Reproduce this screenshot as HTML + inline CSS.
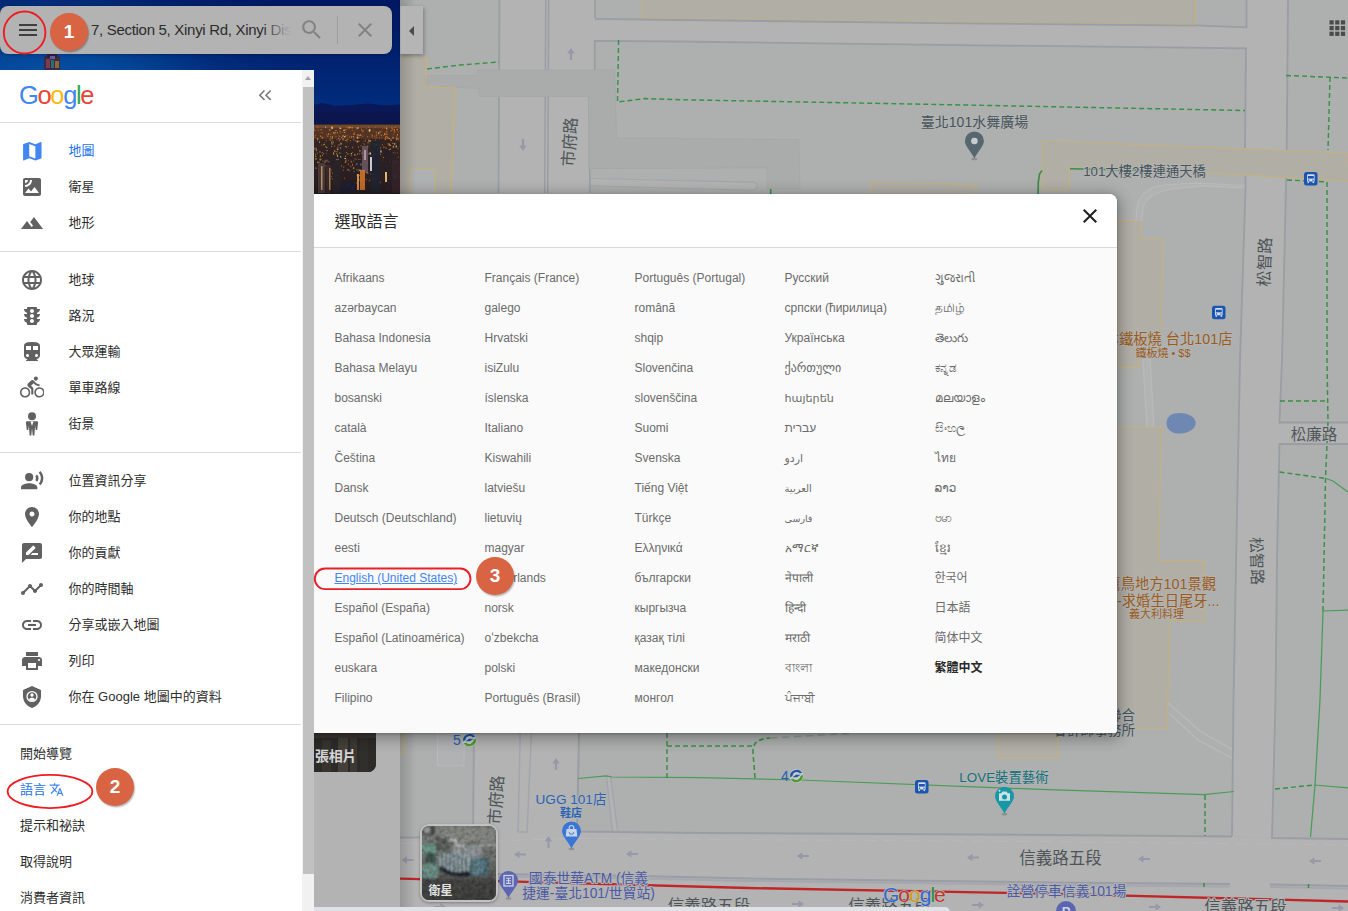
<!DOCTYPE html>
<html lang="zh-TW">
<head>
<meta charset="utf-8">
<title>Google 地圖 - 選取語言</title>
<style>
html,body{margin:0;padding:0;}
body{width:1348px;height:911px;overflow:hidden;background:#b3b3b3;font-family:"Liberation Sans","DejaVu Sans","Noto Sans CJK TC",sans-serif;}
#stage{position:relative;width:1348px;height:911px;overflow:hidden;background:#b3b3b3;}
.abs{position:absolute;}
svg{display:block;}
/* map */
#map{position:absolute;left:400px;top:0;width:948px;height:911px;}
/* place panel */
#panel{position:absolute;left:0;top:0;width:400px;height:911px;background:#b3b3b3;overflow:hidden;}
#photo{position:absolute;left:0;top:0;width:400px;height:240px;}
#photobtn{position:absolute;left:300px;top:700px;width:76px;height:72px;border-radius:8px;overflow:hidden;background:#2b2a28;}
#photobtn span{position:absolute;left:15px;top:45px;color:#d6d6d6;font-size:14px;font-weight:bold;white-space:nowrap;letter-spacing:-0.3px;}
/* search */
#search{position:absolute;left:0;top:6px;width:392px;height:48px;border-radius:8px;background:#b3b3b3;box-shadow:0 1px 3px rgba(0,0,0,.25);}
#search .q{position:absolute;left:91px;top:14px;width:205px;height:20px;line-height:20px;font-size:15px;color:#2c2c2c;white-space:nowrap;overflow:hidden;letter-spacing:-0.3px;}
#search .fade{position:absolute;left:262px;top:8px;width:34px;height:32px;background:linear-gradient(90deg,rgba(179,179,179,0),#b3b3b3 85%);}
#search .sep{position:absolute;left:337px;top:10px;width:1px;height:28px;background:#9d9d9d;}
#collapse{position:absolute;left:400px;top:6px;width:23px;height:48px;background:#b5b5b5;box-shadow:1px 2px 4px rgba(0,0,0,.3);border-left:1px solid #a9a9a9;box-sizing:border-box;}
#collapse i{position:absolute;left:8px;top:19.500px;width:0;height:0;border-top:5px solid transparent;border-bottom:5px solid transparent;border-right:5.500px solid #4a4a4a;}
/* menu */
#menu{position:absolute;left:0;top:70px;width:314px;height:841px;background:#fff;overflow:hidden;}
#menu .sb{position:absolute;left:302px;top:0;width:12px;height:841px;background:#f1f1f1;}
#menu .sb .up{position:absolute;left:3px;top:6px;width:0;height:0;border-left:3.5px solid transparent;border-right:3.5px solid transparent;border-bottom:4px solid #a3a3a3;}
#menu .sb .th{position:absolute;left:1px;top:17px;width:11px;height:787px;background:#c1c1c1;}
#menu .hr{position:absolute;left:0;width:301px;height:1px;background:#dcdcdc;}
#glogo{position:absolute;left:19px;top:7.500px;height:34px;line-height:34px;font-size:25.5px;letter-spacing:-1.35px;white-space:nowrap;font-family:"Liberation Sans",sans-serif;}
#glogo b{font-weight:normal;}
.row{position:absolute;left:0;width:301px;height:36px;}
.row svg{position:absolute;}
.row span{position:absolute;left:68.500px;top:9px;height:20px;line-height:20px;font-size:13px;color:#2e2e2e;white-space:nowrap;}
.row.sel span{color:#1a73e8;}
.row.t span{left:20px;}
/* dialog */
#dlg{position:absolute;left:231px;top:193.500px;width:886px;height:539.500px;border-radius:8px 8px 2px 2px;background:#fafafa;box-shadow:0 3px 14px 3px rgba(0,0,0,.3),0 1px 3px rgba(0,0,0,.22);overflow:hidden;}
#dlg .hd{position:absolute;left:0;top:0;width:886px;height:53.500px;background:#fff;border-bottom:1px solid #dadada;}
#dlg .hd h1{position:absolute;left:103.500px;top:16px;margin:0;font-size:16px;line-height:24px;font-weight:normal;color:#2e2e2e;white-space:nowrap;}
#dlg .hd svg{position:absolute;left:847px;top:10.500px;}
#dlg ul{position:absolute;top:69.800px;margin:0;padding:0;list-style:none;width:150px;}
#dlg li{height:30px;line-height:30px;font-size:12px;color:#6b6b6b;white-space:nowrap;}
#dlg li.cur{font-weight:bold;color:#2a2a2a;}
#dlg li a{color:#4285f4;text-decoration:underline;}
/* annotations */
.badge{position:absolute;width:38px;height:38px;border-radius:50%;background:#d86443;color:#fff;font-weight:bold;font-size:19px;line-height:38px;text-align:center;box-shadow:1px 1.500px 1.500px rgba(0,0,0,.28);font-family:"Liberation Sans",sans-serif;}
#satthumb{position:absolute;left:420px;top:824px;width:74px;height:74px;border:2px solid #c2c2c2;border-radius:9px;overflow:hidden;background:#555;box-shadow:0 1px 3px rgba(0,0,0,.3);}
#satthumb span{position:absolute;left:6.500px;top:57.500px;font-size:12px;line-height:14px;font-weight:bold;color:#e2e2e2;white-space:nowrap;}
#botstrip{position:absolute;left:314px;top:906.500px;width:636px;height:6px;background:#dfe2e7;border-top-right-radius:5px;}

</style>
</head>
<body>
<div id="stage">
<svg id="map" width="948" height="911" viewBox="400 0 948 911" font-family="Liberation Sans, Noto Sans CJK TC, sans-serif">
<defs><linearGradient id="lsh" x1="0" x2="1" y1="0" y2="0"><stop offset="0" stop-color="#000" stop-opacity=".16"/><stop offset="1" stop-color="#000" stop-opacity="0"/></linearGradient></defs>
<rect x="400" y="0" width="948" height="911" fill="#adb0af"/>
<g id="roads">
<polygon points="499.5,0 595,0 595,70 589,97 590,193 584,480 579,733 577,832 473,838 474,733 486,480 498.5,193" fill="#b3b3b3" />
<polygon points="594,18.8 680,19.7 980,23.3 1195.5,25.3 1247,27.3 1247,48.3 980,45.3 680,41.5 594,40.8" fill="#b3b3b3" />
<polygon points="1246.5,0 1288,0 1286.7,150 1286,186 1282,360 1279.5,422 1279.5,444 1277,560 1275.5,700 1272,838 1232,836 1233.5,700 1236.5,540 1240,360 1245.6,186 1245,150 1246.5,47.5" fill="#b3b3b3" />
<polygon points="1279,422.5 1348,422.5 1348,444 1279,444" fill="#b3b3b3" />
<polygon points="400,837.5 474,837.5 577,831.6 700,833 1048,835 1232,837 1272,838 1348,839 1348,911 400,911" fill="#b3b3b3" />
</g>
<g id="buildings">
<polygon points="399,58 427,58 425,86 455,88 451,193 449,260 399,260" fill="#b1aea6" stroke="#c3b182" stroke-width="1.2" />
<polygon points="410.5,169.5 435.5,169.5 435.5,215 410.5,215" fill="#aeb1b1" stroke="#c3b182" stroke-width="1.2" />
<polygon points="642,-2 1195.5,-2 1195.5,24.8 980,22.8 680,19.2 642,18.7" fill="#b1aea6" stroke="#c3b182" stroke-width="1.2" />
<polygon points="871,182 976,184.5 976,230 871,230" fill="#b1aea6" stroke="#c3b182" stroke-width="1.2" />
<polygon points="1090,220.6 1141.5,220.6 1141.5,239 1163,239 1160.7,352 1139.5,352 1139.5,367.7 1090,367.7" fill="#b1aea6" stroke="#c3b182" stroke-width="1.2" />
<polygon points="1090,427 1161.5,427 1158.5,560.6 1204.3,560.6 1204.3,621.5 1170,621.5 1167,728.5 1090,728.5" fill="#b1aea6" stroke="#c3b182" stroke-width="1.2" />
<polygon points="998,700 1058,700 1058,758 998,758" fill="#b1aea6" stroke="#c3b182" stroke-width="1.2" />
<polygon points="396,700 404,700 404,753 396,753" fill="#b1aea6" stroke="#c3b182" stroke-width="1.2" />
<polygon points="437.5,700 464,700 464,766 437.5,766" fill="#b0b2b3" stroke="#b7b9bb" stroke-width="1" />
</g>
<g id="paths">
<path d="M1136,221 L1137,208 C1139,195 1148,187 1163,185 L1197,183 L1245,185.500 L1245,187.500 L1203,185.800 L1172,189 C1155,192 1145,198 1143,208 L1141.700,221 z" fill="#b1b2b2"/>
<path d="M1136,221 L1137,208 C1139,195 1148,187 1163,185 L1197,183 L1245,185.500" fill="none" stroke="#b9babb" stroke-width="1.200"/>
<path d="M1141.700,221 L1143,208 C1145,198 1155,192 1172,189 L1203,185.800 L1245,187.800" fill="none" stroke="#b9babb" stroke-width="1.200"/>
<path d="M1142.700,358 L1146.900,427 L1154,427 L1150,358 z" fill="#b2b3b3"/>
<path d="M1142.700,358 L1146.900,427 M1150,358 L1154,427" fill="none" stroke="#b9babb" stroke-width="1.200"/>
<path d="M1168,703 L1200,731 L1233,750 M1169,713 L1198,740 L1232,758" fill="none" stroke="#b9babb" stroke-width="1.200"/>
<path d="M590,178.500 L753,182.300 a4,4 0 0 1 0,8 L590,185.800 z" fill="#b3b3b3" stroke="#a3a5aa" stroke-width="1"/>
<path d="M606.500,776 L612.500,832 L617.700,832 L610.500,776 z" fill="#b3b3b3"/>
<path d="M606.500,776 L612.500,832 M610.500,776 L617.700,832" fill="none" stroke="#a3a5ac" stroke-width="1.400"/>
</g>
<g id="edges">
<polyline points="499.5,0 498.5,193" fill="none" stroke="#9b9da5" stroke-width="1.8" />
<polyline points="545.8,0 544.7,193" fill="none" stroke="#9b9da5" stroke-width="1.5" />
<polyline points="548.7,0 547.7,193" fill="none" stroke="#9b9da5" stroke-width="1.5" />
<polyline points="595,0 595,18" fill="none" stroke="#9b9da5" stroke-width="1.8" />
<polyline points="1195.5,25.6 980,23.6 680,20 642,19.5 595,18.8" fill="none" stroke="#9b9da5" stroke-width="1.8" />
<polyline points="594.7,70 594.7,40.8 680,41.5 980,45.3 1246,48.3 1245,150 1245.6,186 1240,360 1236.5,540 1233.5,700 1232,836" fill="none" stroke="#9b9da5" stroke-width="1.8" />
<polyline points="1195.5,25.3 1246.5,27.3 1246.5,0" fill="none" stroke="#9b9da5" stroke-width="1.8" />
<polyline points="1288,0 1286.7,150 1286,186 1282,360 1279.5,422.5 1348,422.5" fill="none" stroke="#9b9da5" stroke-width="1.8" />
<polyline points="1348,444 1279.5,444 1277,560 1275.5,700 1272,838 1348,839" fill="none" stroke="#9b9da5" stroke-width="1.8" />
<polyline points="588.7,97 590,193" fill="none" stroke="#9b9da5" stroke-width="1.5" />
<polyline points="474,733 473,837.5 400,837.5" fill="none" stroke="#9b9da5" stroke-width="1.8" />
<polyline points="579,733 577,831.6 700,833 1048,835 1232,836.5" fill="none" stroke="#9b9da5" stroke-width="2" />
<polygon points="521,700 533,700 527,832 518,832" fill="#b3b3b3" stroke="#a3a5ad" stroke-width="1.5" />
<polyline points="498,874 640,876 748,878.5 1048,882.5 1230,884" fill="none" stroke="#9b9da5" stroke-width="2" />
<polyline points="498,876.4 640,878.4 748,880.9 1048,884.9 1230,886.4" fill="none" stroke="#a5a7ae" stroke-width="2" />
<polyline points="1270,884.5 1348,886" fill="none" stroke="#9b9da5" stroke-width="2" />
<polyline points="1270,886.9 1348,888.4" fill="none" stroke="#a5a7ae" stroke-width="2" />
<polyline points="400,843.5 577,838.5 700,839.5 1048,841.5 1348,845" fill="none" stroke="#b8b9bb" stroke-width="1" stroke-dasharray="14 8" />
</g>
<polygon points="1042.5,140.5 1348,153 1349,181 1205,172.7 1069.5,167.5 1069.5,190 1042,190" fill="#b1aea6" stroke="#c3b182" stroke-width="1.2" />
<polygon points="477.5,70 614.5,70 616.5,138 798.7,139.5 800,189 767,189 767,168 588.5,168.5 588.5,96.5 479,96.5 479,88.5 425,86 425,75.5 477.5,75.5" fill="#a9acab" stroke="#a4a7a7" stroke-width="0.8" />
<polyline points="427,58 425,86 455,88 451,193" fill="none" stroke="#c3b182" stroke-width="1.2" />
<g id="green">
<polyline points="427,69 460,65 499,62" fill="none" stroke="#3b8f47" stroke-width="1.45" stroke-dasharray="5 3" />
<polyline points="618.6,40 617.5,102 645,98.6 680,99.7 980,105.3 1245,110.5" fill="none" stroke="#3b8f47" stroke-width="1.45" stroke-dasharray="5 3" />
<polyline points="1286,75.5 1348,78" fill="none" stroke="#3b8f47" stroke-width="1.45" stroke-dasharray="5 3" />
<polyline points="1330,77 1328,150" fill="none" stroke="#3b8f47" stroke-width="1.45" stroke-dasharray="5 3" />
<polyline points="1287,180 1327,182" fill="none" stroke="#3b8f47" stroke-width="1.45" stroke-dasharray="5 3" />
<polyline points="1327,182 1327,360 1328,422 1325.5,478 1324,560 1323,611" fill="none" stroke="#3b8f47" stroke-width="1.45" stroke-dasharray="5 3" />
<polyline points="1280,401 1327,401" fill="none" stroke="#3b8f47" stroke-width="1.45" stroke-dasharray="5 3" />
<polyline points="1279.5,472 1326,478.5" fill="none" stroke="#3b8f47" stroke-width="1.45" stroke-dasharray="5 3" />
<polyline points="1326,478.5 1333,481 1348,492" fill="none" stroke="#4c9c57" stroke-width="1.25" />
<polyline points="1348,610 1323,611 1320,700 1315,785 1310.5,837" fill="none" stroke="#4c9c57" stroke-width="1.25" />
<polyline points="1275,789 1314,785" fill="none" stroke="#3b8f47" stroke-width="1.45" stroke-dasharray="5 3" />
<polyline points="1314,785 1348,788" fill="none" stroke="#4c9c57" stroke-width="1.25" />
<polyline points="1038,195 1038.3,182 1039.5,174 1042,170.5" fill="none" stroke="#3b8f47" stroke-width="1.7" />
<polyline points="1070,168.8 1204,171.5" fill="none" stroke="#3b8f47" stroke-width="1.5" />
<polyline points="770.7,189 770.7,196" fill="none" stroke="#3b8f47" stroke-width="1.6" />
<polyline points="578,778.5 606,776 612,777 700,777.5 800,780 1048,789.7 1204,794.5 1234,791.5" fill="none" stroke="#4c9c57" stroke-width="1.25" />
<polyline points="667,733 667,778" fill="none" stroke="#3b8f47" stroke-width="1.45" stroke-dasharray="5 3" />
<polyline points="667,746 752,746" fill="none" stroke="#3b8f47" stroke-width="1.45" stroke-dasharray="5 3" />
<path d="M755,778 L753,752 C753,742 758,739 770,738" fill="none" stroke="#3b8f47" stroke-width="1.600" stroke-dasharray="5 3"/>
<path d="M770,738 L850,733.500" fill="none" stroke="#8c9c90" stroke-width="1.400" stroke-dasharray="7 5"/>
<polyline points="1205,795 1205,836" fill="none" stroke="#3b8f47" stroke-width="1.45" stroke-dasharray="5 3" />
<polyline points="1204,883 1204,887" fill="none" stroke="#3b8f47" stroke-width="1.6" />
<polyline points="1308.5,884 1308.5,888" fill="none" stroke="#3b8f47" stroke-width="1.6" />
</g>
<polyline points="400,878.6 498,881.2 748,888 1048,893.6 1348,901.5" fill="none" stroke="#c02528" stroke-width="2.3" />
<path d="M1166.500,423 C1166.500,415.500 1173,412.800 1180,413 C1188,413.300 1195.600,417 1195.700,423 C1195.600,428.500 1189,433.300 1180,433.600 C1172,433.800 1166.500,430 1166.500,423 z" fill="#6e87b3"/>
<g id="arrows">
<path d="M571,48 l3.800,5.500 h-2.700 v6.500 h-2.200 v-6.500 h-2.700 z" fill="#9799aa"/>
<path d="M523,151 l3.800,-5.500 h-2.700 v-6.500 h-2.200 v6.500 h-2.700 z" fill="#9799aa"/>
<path d="M556,758 l3.800,5.500 h-2.700 v6.500 h-2.200 v-6.500 h-2.700 z" fill="#9799aa"/>
<path d="M548.5,836 l3.800,5.500 h-2.700 v6.500 h-2.200 v-6.500 h-2.700 z" fill="#9799aa"/>
<path d="M401.5,860 l5.500,-3.800 v2.700 h6.500 v2.200 h-6.500 v2.700 z" fill="#9799aa"/>
<path d="M514,854.5 l5.500,-3.800 v2.700 h6.500 v2.200 h-6.500 v2.700 z" fill="#9799aa"/>
<path d="M626,854 l5.500,-3.800 v2.700 h6.500 v2.200 h-6.500 v2.700 z" fill="#9799aa"/>
<path d="M797,856 l5.500,-3.800 v2.700 h6.500 v2.200 h-6.500 v2.700 z" fill="#9799aa"/>
<path d="M967,857.5 l5.500,-3.800 v2.700 h6.500 v2.200 h-6.500 v2.700 z" fill="#9799aa"/>
<path d="M1138,859 l5.500,-3.800 v2.700 h6.500 v2.200 h-6.500 v2.700 z" fill="#9799aa"/>
<path d="M1309,861 l5.500,-3.800 v2.700 h6.500 v2.200 h-6.500 v2.700 z" fill="#9799aa"/>
<path d="M446,907 l-5.500,-3.800 v2.700 h-6.500 v2.200 h6.500 v2.700 z" fill="#9799aa"/>
<path d="M804,904 l-5.500,-3.800 v2.700 h-6.500 v2.200 h6.500 v2.700 z" fill="#9799aa"/>
<path d="M984,905 l-5.500,-3.800 v2.700 h-6.500 v2.200 h6.500 v2.700 z" fill="#9799aa"/>
<path d="M1161,907 l-5.500,-3.800 v2.700 h-6.500 v2.200 h6.500 v2.700 z" fill="#9799aa"/>
<path d="M1344,908 l-5.500,-3.800 v2.700 h-6.500 v2.200 h6.500 v2.700 z" fill="#9799aa"/>
</g>
<g id="labels">
<text x="570" y="142" font-size="16.5" fill="#505458" text-anchor="middle" font-weight="normal" stroke="#b2b4b4" stroke-width="2" paint-order="stroke" stroke-linejoin="round" transform="rotate(-86 570 142)" dy="5.500">市府路</text>
<text x="496.5" y="800" font-size="16.5" fill="#505458" text-anchor="middle" font-weight="normal" stroke="#b2b4b4" stroke-width="2" paint-order="stroke" stroke-linejoin="round" transform="rotate(-86 496.5 800)" dy="5.500">市府路</text>
<text x="1265" y="262" font-size="16.5" fill="#505458" text-anchor="middle" font-weight="normal" stroke="#b2b4b4" stroke-width="2" paint-order="stroke" stroke-linejoin="round" transform="rotate(-88 1265 262)" dy="5.500">松智路</text>
<text x="1256.5" y="561" font-size="16" fill="#505458" text-anchor="middle" font-weight="normal" stroke="#b2b4b4" stroke-width="2" paint-order="stroke" stroke-linejoin="round" transform="rotate(88 1256.5 561)" dy="5.500">松智路</text>
<text x="1314" y="440" font-size="15.5" fill="#505458" text-anchor="middle" font-weight="normal" stroke="#b2b4b4" stroke-width="2" paint-order="stroke" stroke-linejoin="round" >松廉路</text>
<text x="1060.5" y="864" font-size="16.5" fill="#505458" text-anchor="middle" font-weight="normal" stroke="#b2b4b4" stroke-width="2" paint-order="stroke" stroke-linejoin="round" >信義路五段</text>
<text x="709" y="912" font-size="16.5" fill="#505458" text-anchor="middle" font-weight="normal" stroke="#b2b4b4" stroke-width="2" paint-order="stroke" stroke-linejoin="round" >信義路五段</text>
<text x="889.5" y="912" font-size="16.5" fill="#505458" text-anchor="middle" font-weight="normal" stroke="#b2b4b4" stroke-width="2" paint-order="stroke" stroke-linejoin="round" >信義路五段</text>
<text x="1245.5" y="913" font-size="16.5" fill="#505458" text-anchor="middle" font-weight="normal" stroke="#b2b4b4" stroke-width="2" paint-order="stroke" stroke-linejoin="round" >信義路五段</text>
<text x="974.5" y="127" font-size="14" fill="#48535a" text-anchor="middle" font-weight="normal" stroke="#b2b4b4" stroke-width="2" paint-order="stroke" stroke-linejoin="round" >臺北101水舞廣場</text>
<text x="1144.5" y="176" font-size="13.3" fill="#48535a" text-anchor="middle" font-weight="normal" stroke="#b2b4b4" stroke-width="2" paint-order="stroke" stroke-linejoin="round" >101大樓2樓連通天橋</text>
<text x="1232.5" y="344" font-size="14.3" fill="#9c5b1a" text-anchor="end" font-weight="normal" stroke="#b2b4b4" stroke-width="2" paint-order="stroke" stroke-linejoin="round" >林鐵板燒 台北101店</text>
<text x="1163" y="357" font-size="11" fill="#9c5b1a" text-anchor="middle" font-weight="normal" stroke="#b2b4b4" stroke-width="2" paint-order="stroke" stroke-linejoin="round" >鐵板燒 • $$</text>
<text x="1216" y="589" font-size="14.3" fill="#9c5b1a" text-anchor="end" font-weight="normal" stroke="#b2b4b4" stroke-width="2" paint-order="stroke" stroke-linejoin="round" >鷹鳥地方101景觀</text>
<text x="1219.5" y="605.5" font-size="14.3" fill="#9c5b1a" text-anchor="end" font-weight="normal" stroke="#b2b4b4" stroke-width="2" paint-order="stroke" stroke-linejoin="round" >廳-求婚生日尾牙...</text>
<text x="1156.5" y="618" font-size="11" fill="#9c5b1a" text-anchor="middle" font-weight="normal" stroke="#b2b4b4" stroke-width="2" paint-order="stroke" stroke-linejoin="round" >義大利料理</text>
<text x="1135" y="719.5" font-size="13.6" fill="#48535a" text-anchor="end" font-weight="normal" stroke="#b2b4b4" stroke-width="2" paint-order="stroke" stroke-linejoin="round" >聯合</text>
<text x="1135" y="735" font-size="13.6" fill="#48535a" text-anchor="end" font-weight="normal" stroke="#b2b4b4" stroke-width="2" paint-order="stroke" stroke-linejoin="round" >會計師事務所</text>
<text x="1004" y="782" font-size="13.4" fill="#136f7b" text-anchor="middle" font-weight="normal" stroke="#b2b4b4" stroke-width="2" paint-order="stroke" stroke-linejoin="round" >LOVE裝置藝術</text>
<text x="571" y="804" font-size="13.6" fill="#2b63b5" text-anchor="middle" font-weight="normal" stroke="#b2b4b4" stroke-width="2" paint-order="stroke" stroke-linejoin="round" >UGG 101店</text>
<text x="571" y="817" font-size="11" fill="#2b63b5" text-anchor="middle" font-weight="bold" stroke="#b2b4b4" stroke-width="2" paint-order="stroke" stroke-linejoin="round" >鞋店</text>
<text x="588.5" y="882.5" font-size="13.8" fill="#4c58a6" text-anchor="middle" font-weight="normal" stroke="#b2b4b4" stroke-width="2" paint-order="stroke" stroke-linejoin="round" >國泰世華ATM (信義</text>
<text x="588.5" y="898" font-size="13.8" fill="#4c58a6" text-anchor="middle" font-weight="normal" stroke="#b2b4b4" stroke-width="2" paint-order="stroke" stroke-linejoin="round" >捷運-臺北101/世貿站)</text>
<text x="1066.5" y="896" font-size="13.8" fill="#4c58a6" text-anchor="middle" font-weight="normal" stroke="#b2b4b4" stroke-width="2" paint-order="stroke" stroke-linejoin="round" >詮營停車信義101場</text>
<text x="457" y="745" font-size="14" fill="#2a5bb0" text-anchor="middle" font-weight="normal" stroke="#b2b4b4" stroke-width="0" paint-order="stroke" stroke-linejoin="round" >5</text>
<text x="785" y="781" font-size="14" fill="#2a5bb0" text-anchor="middle" font-weight="normal" stroke="#b2b4b4" stroke-width="0" paint-order="stroke" stroke-linejoin="round" >4</text>
</g>
<g id="icons">
<g><ellipse cx="974.4" cy="159.0" rx="3" ry="1.200" fill="#000" opacity=".18"/><path d="M974.4,158.5 C971.9,152.5 964.9,146.5 964.9,141.0 a9.5,9.5 0 1 1 19.0,0 C983.9,146.5 976.9,152.5 974.4,158.5 z" fill="#56676f"/><circle cx="974.4" cy="141.0" r="3.300" fill="#c9cdcf"/></g>
<g><ellipse cx="571.5" cy="849.0" rx="3" ry="1.200" fill="#000" opacity=".18"/><path d="M571.5,848.5 C569.0,842.5 562.0,836.5 562.0,831.0 a9.5,9.5 0 1 1 19.0,0 C581.0,836.5 574.0,842.5 571.5,848.5 z" fill="#3a76d6"/><path d="M566.5,829.0 h10 l0.800,7.500 h-11.600 z" fill="#c9d4e8"/><path d="M569.2,829.0 v-1.200 a2.300,2.300 0 0 1 4.600,0 v1.200" fill="none" stroke="#c9d4e8" stroke-width="1.200"/><path d="M569.3,832.2 a2.200,2.200 0 0 0 4.400,0" fill="none" stroke="#3a74d0" stroke-width="1"/></g>
<g><ellipse cx="508.5" cy="898.5" rx="3" ry="1.200" fill="#000" opacity=".18"/><path d="M508.5,898 C506.0,892 499.0,886.0 499.0,880.5 a9.5,9.5 0 1 1 19.0,0 C518.0,886.0 511.0,892 508.5,898 z" fill="#5b66b2"/><rect x="504.0" y="875.5" width="9" height="10.500" fill="none" stroke="#d0d3e6" stroke-width="1.300"/><path d="M506.0,878.2 h5 M506.0,880.8 h5 M506.0,883.4 h5 M508.5,878.2 v5.200" stroke="#d0d3e6" stroke-width="1.100" fill="none"/></g>
<g><ellipse cx="1004.5" cy="814.2" rx="3" ry="1.200" fill="#000" opacity=".18"/><path d="M1004.5,813.7 C1002.0,807.7 995.0,801.7 995.0,796.2 a9.5,9.5 0 1 1 19.0,0 C1014.0,801.7 1007.0,807.7 1004.5,813.7 z" fill="#1897a6"/><path d="M999.0,793.2 h2.300 l1.200,-1.600 h4 l1.200,1.600 h2.300 v7.600 h-11 z" fill="#cfe3e6"/><circle cx="1004.5" cy="797.0" r="2.500" fill="#1897a6"/><circle cx="999.5" cy="790.7" r="1" fill="#cfe3e6"/></g>
<g><rect x="1304" y="172" width="13.500" height="13.500" rx="2.500" fill="#1a55b0"/><path d="M1307,175.5 a1.300,1.300 0 0 1 1.300,-1.300 h5 a1.300,1.300 0 0 1 1.300,1.300 v6 h-7.600 z" fill="#d5dcea"/><rect x="1307.8" y="176" width="6" height="2.600" fill="#1a55b0"/><circle cx="1308.6" cy="180.2" r=".700" fill="#1a55b0"/><circle cx="1313" cy="180.2" r=".700" fill="#1a55b0"/><rect x="1307.5" y="181.5" width="1.500" height="1.600" fill="#d5dcea"/><rect x="1312.6" y="181.5" width="1.500" height="1.600" fill="#d5dcea"/></g>
<g><rect x="1212" y="305.7" width="13.500" height="13.500" rx="2.500" fill="#1a55b0"/><path d="M1215,309.2 a1.300,1.300 0 0 1 1.300,-1.300 h5 a1.300,1.300 0 0 1 1.300,1.300 v6 h-7.600 z" fill="#d5dcea"/><rect x="1215.8" y="309.7" width="6" height="2.600" fill="#1a55b0"/><circle cx="1216.6" cy="313.9" r=".700" fill="#1a55b0"/><circle cx="1221" cy="313.9" r=".700" fill="#1a55b0"/><rect x="1215.5" y="315.2" width="1.500" height="1.600" fill="#d5dcea"/><rect x="1220.6" y="315.2" width="1.500" height="1.600" fill="#d5dcea"/></g>
<g><rect x="915" y="780" width="13.500" height="13.500" rx="2.500" fill="#1a55b0"/><path d="M918,783.5 a1.300,1.300 0 0 1 1.300,-1.300 h5 a1.300,1.300 0 0 1 1.300,1.300 v6 h-7.600 z" fill="#d5dcea"/><rect x="918.8" y="784" width="6" height="2.600" fill="#1a55b0"/><circle cx="919.6" cy="788.2" r=".700" fill="#1a55b0"/><circle cx="924" cy="788.2" r=".700" fill="#1a55b0"/><rect x="918.5" y="789.5" width="1.500" height="1.600" fill="#d5dcea"/><rect x="923.6" y="789.5" width="1.500" height="1.600" fill="#d5dcea"/></g>
<g><circle cx="469.5" cy="740" r="7" fill="#c6cbc9"/><path d="M463.2,741.5 a6.500,6.500 0 0 1 12,-4.500 l-2.500,.300 a4.300,4.300 0 0 0 -7.300,2.600 z" fill="#2156a8"/><path d="M475.8,738.5 a6.500,6.500 0 0 1 -12,4.500 l2.500,-.300 a4.300,4.300 0 0 0 7.300,-2.600 z" fill="#4e9a32"/><path d="M465.5,741.3 l3.500,-2.600 h4.500 l-3.500,2.600 z" fill="#2156a8"/></g>
<g><circle cx="796.5" cy="776" r="7" fill="#c6cbc9"/><path d="M790.2,777.5 a6.500,6.500 0 0 1 12,-4.500 l-2.500,.300 a4.300,4.300 0 0 0 -7.300,2.600 z" fill="#2156a8"/><path d="M802.8,774.5 a6.500,6.500 0 0 1 -12,4.500 l2.500,-.300 a4.300,4.300 0 0 0 7.300,-2.600 z" fill="#4e9a32"/><path d="M792.5,777.3 l3.500,-2.600 h4.500 l-3.500,2.600 z" fill="#2156a8"/></g>
<circle cx="1066" cy="911" r="10" fill="#5b66b2"/>
<text x="1066" y="916" font-size="13" fill="#d0d3e6" text-anchor="middle" font-weight="bold" stroke="#b2b4b4" stroke-width="0" paint-order="stroke" stroke-linejoin="round" >P</text>
</g>
<g id="maplogo" font-size="21" letter-spacing="-1" stroke="#bcbcbc" stroke-width="1.400" paint-order="stroke" stroke-linejoin="round"><text x="883" y="901.500"><tspan fill="#2f6ad0">G</tspan><tspan fill="#c0352b">o</tspan><tspan fill="#cc9f0a">o</tspan><tspan fill="#2f6ad0">g</tspan><tspan fill="#258c41">l</tspan><tspan fill="#c0352b">e</tspan></text></g>
<g fill="#4a4a4a">
<rect x="1329.5" y="20.3" width="4.200" height="4.200"/>
<rect x="1329.5" y="26.0" width="4.200" height="4.200"/>
<rect x="1329.5" y="31.700000000000003" width="4.200" height="4.200"/>
<rect x="1335.2" y="20.3" width="4.200" height="4.200"/>
<rect x="1335.2" y="26.0" width="4.200" height="4.200"/>
<rect x="1335.2" y="31.700000000000003" width="4.200" height="4.200"/>
<rect x="1340.9" y="20.3" width="4.200" height="4.200"/>
<rect x="1340.9" y="26.0" width="4.200" height="4.200"/>
<rect x="1340.9" y="31.700000000000003" width="4.200" height="4.200"/>
</g>
<rect x="400" y="0" width="16" height="911" fill="url(#lsh)"/>
</svg>
<div id="panel">
<svg id="photo" width="400" height="240" viewBox="0 0 400 240">
<defs><linearGradient id="sky" x1="0" y1="0" x2="0" y2="1"><stop offset="0" stop-color="#001860"/><stop offset=".25" stop-color="#002270"/><stop offset=".44" stop-color="#002d7c"/><stop offset="1" stop-color="#002d7c"/></linearGradient><radialGradient id="glow" cx="50" cy="190" r="300" gradientUnits="userSpaceOnUse"><stop offset="0" stop-color="#0a6ec0" stop-opacity=".95"/><stop offset=".45" stop-color="#0660b4" stop-opacity=".62"/><stop offset=".7" stop-color="#0450a0" stop-opacity=".2"/><stop offset="1" stop-color="#003488" stop-opacity="0"/></radialGradient><linearGradient id="city" x1="0" y1="0" x2="0" y2="1"><stop offset="0" stop-color="#3c2a22"/><stop offset=".3" stop-color="#2c2022"/><stop offset="1" stop-color="#1e181e"/></linearGradient><filter id="pb" x="-5%" y="-5%" width="110%" height="110%"><feGaussianBlur stdDeviation=".4"/></filter></defs>
<rect width="400" height="240" fill="url(#sky)"/>
<rect width="400" height="240" fill="url(#glow)"/>
<g filter="url(#pb)"><rect x="44" y="56" width="16" height="15" fill="#3b2a4a"/><rect x="47" y="53" width="10" height="5" fill="#2a2448"/><rect x="46" y="59" width="4" height="9" fill="#7a3a55"/><rect x="51" y="60" width="3" height="8" fill="#2a6f6a"/><rect x="55" y="61" width="4" height="7" fill="#8a6a3a"/><rect x="50" y="56" width="5" height="3" fill="#6a5a9a"/></g>
<path d="M300,108 L322,103 L336,106 L352,105 L368,103.500 L384,105.500 L400,104.500 V130 H300 z" fill="#0b1858"/>
<rect x="300" y="112" width="100" height="16" fill="#0c164e"/>
<rect x="300" y="124" width="100" height="120" fill="url(#city)"/>
<g filter="url(#pb)">
<rect x="314" y="125" width="86" height="3" fill="#a06a40" opacity=".5"/>
<rect x="314" y="127" width="86" height="12" fill="#7a4520" opacity=".4"/>
<rect x="341.8" y="131.7" width="0.8" height="0.8" fill="#e07a20" opacity="0.40"/>
<rect x="364.1" y="173.0" width="1" height="0.8" fill="#ff9a2e" opacity="0.59"/>
<rect x="320.0" y="129.6" width="1.5" height="0.8" fill="#7fc0e0" opacity="0.42"/>
<rect x="333.2" y="152.4" width="0.8" height="2" fill="#ffb347" opacity="0.89"/>
<rect x="318.0" y="168.0" width="1" height="2" fill="#ffa030" opacity="0.65"/>
<rect x="363.1" y="148.9" width="1" height="0.8" fill="#7fc0e0" opacity="0.66"/>
<rect x="330.2" y="129.8" width="0.8" height="0.8" fill="#7fc0e0" opacity="0.46"/>
<rect x="372.5" y="142.7" width="1" height="2" fill="#7fc0e0" opacity="0.86"/>
<rect x="345.1" y="135.4" width="1" height="1" fill="#ff9a2e" opacity="0.67"/>
<rect x="359.2" y="169.5" width="1.5" height="1.5" fill="#7fc0e0" opacity="0.89"/>
<rect x="324.2" y="142.3" width="1" height="1" fill="#d9601e" opacity="0.58"/>
<rect x="396.7" y="129.1" width="1" height="1.5" fill="#e8742a" opacity="0.68"/>
<rect x="363.9" y="144.0" width="0.8" height="1.5" fill="#d9601e" opacity="0.73"/>
<rect x="319.6" y="158.5" width="1" height="2" fill="#ffd27a" opacity="0.74"/>
<rect x="390.3" y="139.3" width="1.5" height="1.5" fill="#ffa030" opacity="0.69"/>
<rect x="356.5" y="134.2" width="1" height="1" fill="#f08a28" opacity="0.57"/>
<rect x="392.8" y="145.8" width="1" height="2" fill="#fff0d0" opacity="0.65"/>
<rect x="390.0" y="164.7" width="1" height="2" fill="#e8742a" opacity="0.73"/>
<rect x="346.7" y="134.7" width="0.8" height="1" fill="#ffa030" opacity="0.48"/>
<rect x="334.1" y="145.3" width="1" height="1.5" fill="#ffd27a" opacity="0.35"/>
<rect x="350.0" y="140.2" width="1" height="1" fill="#e07a20" opacity="0.87"/>
<rect x="370.3" y="159.1" width="1.5" height="2" fill="#fff0d0" opacity="0.57"/>
<rect x="322.9" y="152.8" width="0.8" height="1" fill="#ff9a2e" opacity="0.89"/>
<rect x="351.9" y="130.3" width="0.8" height="0.8" fill="#ffb347" opacity="0.66"/>
<rect x="360.1" y="178.0" width="0.8" height="0.8" fill="#f08a28" opacity="0.69"/>
<rect x="326.8" y="135.5" width="1" height="1.5" fill="#d9601e" opacity="0.42"/>
<rect x="387.0" y="187.5" width="1.5" height="2" fill="#d9601e" opacity="0.52"/>
<rect x="326.4" y="159.7" width="1" height="2" fill="#ffa030" opacity="0.63"/>
<rect x="331.6" y="178.4" width="1" height="1" fill="#e07a20" opacity="0.85"/>
<rect x="379.2" y="137.3" width="0.8" height="1.5" fill="#e07a20" opacity="0.55"/>
<rect x="328.4" y="161.3" width="1" height="1" fill="#7fc0e0" opacity="0.80"/>
<rect x="398.7" y="167.5" width="1" height="2" fill="#f08a28" opacity="0.46"/>
<rect x="356.4" y="158.5" width="0.8" height="1.5" fill="#d9601e" opacity="0.49"/>
<rect x="373.6" y="179.1" width="1.5" height="1.5" fill="#e8742a" opacity="0.39"/>
<rect x="322.8" y="144.6" width="1" height="1" fill="#d9601e" opacity="0.69"/>
<rect x="391.4" y="166.4" width="1.5" height="1.5" fill="#ff8040" opacity="0.40"/>
<rect x="370.8" y="173.0" width="1" height="2" fill="#ffa030" opacity="0.59"/>
<rect x="368.7" y="129.5" width="1.5" height="2" fill="#fff0d0" opacity="0.76"/>
<rect x="321.3" y="132.0" width="1" height="0.8" fill="#ffa030" opacity="0.67"/>
<rect x="354.0" y="154.0" width="1.5" height="1.5" fill="#ffa030" opacity="0.65"/>
<rect x="325.3" y="126.7" width="0.8" height="1" fill="#fff0d0" opacity="0.89"/>
<rect x="330.8" y="169.4" width="0.8" height="1.5" fill="#f08a28" opacity="0.51"/>
<rect x="334.7" y="150.2" width="1" height="2" fill="#ffa030" opacity="0.38"/>
<rect x="377.6" y="171.7" width="1.5" height="1" fill="#e07a20" opacity="0.43"/>
<rect x="357.9" y="169.3" width="1" height="0.8" fill="#ffa030" opacity="0.44"/>
<rect x="354.7" y="158.1" width="0.8" height="1.5" fill="#ff8040" opacity="0.64"/>
<rect x="361.8" y="162.1" width="0.8" height="0.8" fill="#f08a28" opacity="0.46"/>
<rect x="317.6" y="129.8" width="1.5" height="0.8" fill="#ff9a2e" opacity="0.59"/>
<rect x="366.7" y="146.3" width="1" height="1.5" fill="#d9601e" opacity="0.63"/>
<rect x="383.4" y="146.4" width="1" height="1.5" fill="#e07a20" opacity="0.84"/>
<rect x="331.4" y="143.6" width="1.5" height="0.8" fill="#fff0d0" opacity="0.59"/>
<rect x="320.2" y="135.1" width="0.8" height="1" fill="#ff8040" opacity="0.52"/>
<rect x="324.5" y="161.6" width="1" height="1" fill="#ffd27a" opacity="0.84"/>
<rect x="397.2" y="134.3" width="0.8" height="2" fill="#d9601e" opacity="0.44"/>
<rect x="371.4" y="134.4" width="1.5" height="2" fill="#e8742a" opacity="0.58"/>
<rect x="344.7" y="129.7" width="1" height="0.8" fill="#e8742a" opacity="0.65"/>
<rect x="351.9" y="126.9" width="1" height="1.5" fill="#e07a20" opacity="0.88"/>
<rect x="323.7" y="174.0" width="1" height="0.8" fill="#ff9a2e" opacity="0.50"/>
<rect x="317.4" y="161.7" width="1" height="1" fill="#fff0d0" opacity="0.82"/>
<rect x="372.1" y="177.6" width="1.5" height="1" fill="#e07a20" opacity="0.86"/>
<rect x="363.1" y="156.6" width="0.8" height="1.5" fill="#ffb347" opacity="0.79"/>
<rect x="329.8" y="171.5" width="1" height="0.8" fill="#ff8040" opacity="0.40"/>
<rect x="336.4" y="151.4" width="1" height="0.8" fill="#ffd27a" opacity="0.82"/>
<rect x="353.0" y="139.0" width="1.5" height="1.5" fill="#7fc0e0" opacity="0.42"/>
<rect x="359.3" y="135.0" width="0.8" height="1" fill="#ffd27a" opacity="0.38"/>
<rect x="331.4" y="137.9" width="1" height="1" fill="#ffd27a" opacity="0.60"/>
<rect x="371.8" y="136.2" width="0.8" height="1.5" fill="#ffb347" opacity="0.36"/>
<rect x="377.0" y="148.5" width="1" height="2" fill="#f08a28" opacity="0.86"/>
<rect x="323.1" y="164.7" width="1.5" height="2" fill="#e07a20" opacity="0.81"/>
<rect x="347.8" y="146.3" width="1" height="1" fill="#e8742a" opacity="0.46"/>
<rect x="389.8" y="158.4" width="1" height="2" fill="#e8742a" opacity="0.89"/>
<rect x="386.0" y="126.7" width="1" height="2" fill="#ffa030" opacity="0.38"/>
<rect x="371.2" y="140.7" width="1" height="1" fill="#ffd27a" opacity="0.37"/>
<rect x="329.9" y="136.2" width="0.8" height="1.5" fill="#e8742a" opacity="0.88"/>
<rect x="397.6" y="148.3" width="1" height="0.8" fill="#ffd27a" opacity="0.47"/>
<rect x="329.7" y="138.8" width="0.8" height="2" fill="#ffd27a" opacity="0.63"/>
<rect x="331.3" y="146.2" width="0.8" height="0.8" fill="#ffd27a" opacity="0.80"/>
<rect x="326.4" y="150.3" width="1.5" height="0.8" fill="#ffd27a" opacity="0.52"/>
<rect x="334.0" y="150.2" width="1" height="2" fill="#e8742a" opacity="0.75"/>
<rect x="356.5" y="136.8" width="1" height="0.8" fill="#e07a20" opacity="0.70"/>
<rect x="377.1" y="164.2" width="1" height="0.8" fill="#ff8040" opacity="0.67"/>
<rect x="390.8" y="155.6" width="1" height="0.8" fill="#ffb347" opacity="0.37"/>
<rect x="368.8" y="179.6" width="1.5" height="2" fill="#e07a20" opacity="0.38"/>
<rect x="315.6" y="147.5" width="1" height="2" fill="#ffd27a" opacity="0.35"/>
<rect x="382.6" y="159.6" width="0.8" height="0.8" fill="#d9601e" opacity="0.49"/>
<rect x="320.4" y="136.0" width="1" height="1" fill="#ff8040" opacity="0.89"/>
<rect x="356.5" y="140.8" width="1.5" height="1.5" fill="#ffb347" opacity="0.69"/>
<rect x="369.3" y="129.1" width="1" height="1.5" fill="#ffd27a" opacity="0.71"/>
<rect x="373.6" y="152.1" width="1" height="0.8" fill="#d9601e" opacity="0.38"/>
<rect x="337.1" y="154.9" width="1" height="2" fill="#ffd27a" opacity="0.74"/>
<rect x="338.6" y="144.4" width="0.8" height="1" fill="#ffd27a" opacity="0.89"/>
<rect x="394.5" y="126.9" width="1.5" height="0.8" fill="#e07a20" opacity="0.88"/>
<rect x="352.7" y="136.1" width="1" height="1" fill="#ff9a2e" opacity="0.67"/>
<rect x="326.2" y="147.1" width="1" height="1" fill="#7fc0e0" opacity="0.80"/>
<rect x="357.8" y="170.6" width="1" height="1" fill="#d9601e" opacity="0.84"/>
<rect x="355.8" y="127.3" width="0.8" height="2" fill="#ff8040" opacity="0.60"/>
<rect x="340.0" y="131.4" width="1" height="2" fill="#e8742a" opacity="0.42"/>
<rect x="342.5" y="138.4" width="1" height="2" fill="#ff9a2e" opacity="0.87"/>
<rect x="330.8" y="126.5" width="1" height="1.5" fill="#e8742a" opacity="0.39"/>
<rect x="347.6" y="169.0" width="0.8" height="1.5" fill="#fff0d0" opacity="0.77"/>
<rect x="387.5" y="136.6" width="0.8" height="1.5" fill="#ff8040" opacity="0.86"/>
<rect x="335.4" y="136.0" width="1" height="1" fill="#e8742a" opacity="0.78"/>
<rect x="350.8" y="127.4" width="1.5" height="1" fill="#ff9a2e" opacity="0.38"/>
<rect x="377.0" y="143.7" width="1" height="1.5" fill="#d9601e" opacity="0.38"/>
<rect x="393.7" y="130.9" width="1.5" height="2" fill="#e8742a" opacity="0.50"/>
<rect x="336.0" y="159.0" width="1" height="2" fill="#ff8040" opacity="0.48"/>
<rect x="355.6" y="154.7" width="0.8" height="1" fill="#ff8040" opacity="0.44"/>
<rect x="331.9" y="172.6" width="1.5" height="1" fill="#d9601e" opacity="0.85"/>
<rect x="399.7" y="143.7" width="1" height="1" fill="#f08a28" opacity="0.40"/>
<rect x="343.4" y="129.6" width="1" height="1.5" fill="#ffd27a" opacity="0.80"/>
<rect x="331.4" y="127.0" width="1.5" height="2" fill="#fff0d0" opacity="0.76"/>
<rect x="332.1" y="136.2" width="0.8" height="2" fill="#ffd27a" opacity="0.67"/>
<rect x="345.0" y="155.8" width="1" height="0.8" fill="#ffd27a" opacity="0.84"/>
<rect x="347.1" y="153.4" width="1.5" height="1.5" fill="#ffb347" opacity="0.42"/>
<rect x="350.6" y="160.7" width="1.5" height="2" fill="#ffb347" opacity="0.39"/>
<rect x="394.0" y="175.2" width="1.5" height="2" fill="#f08a28" opacity="0.78"/>
<rect x="333.2" y="131.8" width="0.8" height="2" fill="#ff9a2e" opacity="0.65"/>
<rect x="317.4" y="162.0" width="1" height="0.8" fill="#ff8040" opacity="0.74"/>
<rect x="396.8" y="152.4" width="1.5" height="0.8" fill="#ff9a2e" opacity="0.39"/>
<rect x="359.1" y="150.1" width="1.5" height="1.5" fill="#f08a28" opacity="0.78"/>
<rect x="314.1" y="147.8" width="1.5" height="1.5" fill="#e8742a" opacity="0.70"/>
<rect x="390.0" y="144.8" width="1" height="1" fill="#ffb347" opacity="0.88"/>
<rect x="374.6" y="137.7" width="0.8" height="1" fill="#d9601e" opacity="0.84"/>
<rect x="369.7" y="129.3" width="1" height="2" fill="#e8742a" opacity="0.47"/>
<rect x="316.9" y="138.9" width="1.5" height="1.5" fill="#ff8040" opacity="0.57"/>
<rect x="314.6" y="137.1" width="0.8" height="1" fill="#d9601e" opacity="0.88"/>
<rect x="340.8" y="164.8" width="1" height="2" fill="#f08a28" opacity="0.50"/>
<rect x="390.5" y="130.2" width="1.5" height="1" fill="#f08a28" opacity="0.62"/>
<rect x="392.3" y="128.4" width="1" height="2" fill="#ffb347" opacity="0.47"/>
<rect x="397.8" y="131.4" width="0.8" height="0.8" fill="#ffa030" opacity="0.57"/>
<rect x="391.2" y="170.3" width="0.8" height="0.8" fill="#ffa030" opacity="0.53"/>
<rect x="330.0" y="176.2" width="1.5" height="0.8" fill="#ffd27a" opacity="0.72"/>
<rect x="346.6" y="140.4" width="1" height="2" fill="#ffa030" opacity="0.41"/>
<rect x="320.7" y="129.3" width="1.5" height="0.8" fill="#e07a20" opacity="0.88"/>
<rect x="331.8" y="139.7" width="1" height="2" fill="#ff9a2e" opacity="0.38"/>
<rect x="354.7" y="140.3" width="1.5" height="1" fill="#e8742a" opacity="0.55"/>
<rect x="391.1" y="127.5" width="1.5" height="1" fill="#ff8040" opacity="0.77"/>
<rect x="317.5" y="127.7" width="0.8" height="0.8" fill="#ffd27a" opacity="0.46"/>
<rect x="319.4" y="151.2" width="1" height="1.5" fill="#e8742a" opacity="0.88"/>
<rect x="367.1" y="135.9" width="1" height="1.5" fill="#ffd27a" opacity="0.35"/>
<rect x="379.0" y="173.8" width="0.8" height="0.8" fill="#f08a28" opacity="0.41"/>
<rect x="375.5" y="144.4" width="1.5" height="1.5" fill="#fff0d0" opacity="0.80"/>
<rect x="325.4" y="145.8" width="0.8" height="1.5" fill="#ffa030" opacity="0.68"/>
<rect x="342.2" y="138.2" width="1" height="0.8" fill="#e07a20" opacity="0.46"/>
<rect x="378.7" y="135.3" width="0.8" height="0.8" fill="#d9601e" opacity="0.65"/>
<rect x="342.0" y="183.7" width="0.8" height="0.8" fill="#ffd27a" opacity="0.69"/>
<rect x="331.9" y="142.4" width="1.5" height="1" fill="#f08a28" opacity="0.42"/>
<rect x="353.6" y="171.1" width="1" height="0.8" fill="#ffd27a" opacity="0.51"/>
<rect x="362.8" y="140.4" width="1" height="1" fill="#d9601e" opacity="0.49"/>
<rect x="335.1" y="131.8" width="1" height="1.5" fill="#ff9a2e" opacity="0.57"/>
<rect x="399.4" y="146.3" width="1" height="0.8" fill="#ff8040" opacity="0.61"/>
<rect x="317.2" y="126.0" width="1" height="2" fill="#e8742a" opacity="0.37"/>
<rect x="339.3" y="130.6" width="1" height="1" fill="#ff9a2e" opacity="0.55"/>
<rect x="388.5" y="143.7" width="1" height="0.8" fill="#ff9a2e" opacity="0.70"/>
<rect x="375.0" y="139.4" width="0.8" height="1.5" fill="#e8742a" opacity="0.43"/>
<rect x="331.5" y="135.6" width="1" height="0.8" fill="#e8742a" opacity="0.57"/>
<rect x="346.0" y="152.1" width="0.8" height="1" fill="#ffb347" opacity="0.79"/>
<rect x="361.1" y="128.7" width="0.8" height="2" fill="#ff8040" opacity="0.65"/>
<rect x="369.0" y="129.6" width="1" height="2" fill="#ffd27a" opacity="0.58"/>
<rect x="338.4" y="137.7" width="0.8" height="1.5" fill="#7fc0e0" opacity="0.84"/>
<rect x="349.6" y="126.9" width="1" height="1" fill="#fff0d0" opacity="0.75"/>
<rect x="331.5" y="126.1" width="1" height="2" fill="#ff9a2e" opacity="0.80"/>
<rect x="348.9" y="170.2" width="1.5" height="1" fill="#ffa030" opacity="0.36"/>
<rect x="361.4" y="153.1" width="1.5" height="0.8" fill="#7fc0e0" opacity="0.69"/>
<rect x="345.9" y="146.2" width="1" height="1.5" fill="#ffd27a" opacity="0.44"/>
<rect x="328.8" y="128.8" width="1.5" height="2" fill="#f08a28" opacity="0.52"/>
<rect x="386.0" y="128.0" width="1.5" height="1.5" fill="#ffb347" opacity="0.68"/>
<rect x="368.7" y="129.5" width="1" height="1" fill="#7fc0e0" opacity="0.57"/>
<rect x="386.8" y="165.5" width="1" height="1" fill="#ffb347" opacity="0.57"/>
<rect x="358.5" y="140.8" width="0.8" height="1" fill="#f08a28" opacity="0.88"/>
<rect x="384.1" y="133.3" width="0.8" height="1.5" fill="#ff9a2e" opacity="0.56"/>
<rect x="353.2" y="167.2" width="1" height="2" fill="#ffd27a" opacity="0.67"/>
<rect x="350.6" y="154.2" width="1.5" height="2" fill="#ffa030" opacity="0.36"/>
<rect x="367.2" y="145.5" width="1" height="2" fill="#7fc0e0" opacity="0.78"/>
<rect x="353.4" y="132.8" width="1.5" height="2" fill="#ff9a2e" opacity="0.39"/>
<rect x="344.8" y="140.0" width="1.5" height="0.8" fill="#ffb347" opacity="0.70"/>
<rect x="321.1" y="158.7" width="0.8" height="0.8" fill="#e07a20" opacity="0.84"/>
<rect x="370.1" y="162.1" width="0.8" height="0.8" fill="#7fc0e0" opacity="0.75"/>
<rect x="384.1" y="133.3" width="1.5" height="1.5" fill="#ffa030" opacity="0.73"/>
<rect x="376.0" y="134.3" width="1" height="1.5" fill="#ffa030" opacity="0.53"/>
<rect x="366.8" y="172.5" width="1.5" height="1" fill="#ffd27a" opacity="0.63"/>
<rect x="393.1" y="133.8" width="1" height="1" fill="#e8742a" opacity="0.55"/>
<rect x="331.1" y="141.7" width="1" height="1.5" fill="#fff0d0" opacity="0.44"/>
<rect x="381.5" y="130.5" width="0.8" height="1.5" fill="#d9601e" opacity="0.66"/>
<rect x="363.9" y="170.2" width="0.8" height="1.5" fill="#e07a20" opacity="0.70"/>
<rect x="347.9" y="163.1" width="1" height="2" fill="#e8742a" opacity="0.67"/>
<rect x="345.0" y="160.7" width="1.5" height="1" fill="#ffa030" opacity="0.69"/>
<rect x="396.4" y="137.2" width="1" height="1.5" fill="#ff8040" opacity="0.88"/>
<rect x="388.8" y="175.2" width="1" height="0.8" fill="#ffb347" opacity="0.47"/>
<rect x="339.0" y="152.3" width="1.5" height="1.5" fill="#ffb347" opacity="0.42"/>
<rect x="333.5" y="153.8" width="0.8" height="0.8" fill="#ffb347" opacity="0.66"/>
<rect x="340.1" y="147.1" width="1" height="2" fill="#7fc0e0" opacity="0.52"/>
<rect x="325.5" y="140.1" width="1.5" height="1" fill="#ffa030" opacity="0.36"/>
<rect x="382.9" y="157.0" width="1.5" height="0.8" fill="#ff9a2e" opacity="0.70"/>
<rect x="388.9" y="162.0" width="1.5" height="1.5" fill="#ffb347" opacity="0.38"/>
<rect x="384.6" y="171.2" width="1.5" height="2" fill="#f08a28" opacity="0.44"/>
<rect x="314.0" y="128.6" width="0.8" height="2" fill="#ffa030" opacity="0.48"/>
<rect x="319.0" y="161.7" width="0.8" height="1" fill="#ffa030" opacity="0.58"/>
<rect x="358.6" y="153.3" width="1.5" height="1" fill="#e07a20" opacity="0.52"/>
<rect x="339.8" y="128.1" width="1.5" height="0.8" fill="#fff0d0" opacity="0.81"/>
<rect x="378.1" y="144.4" width="1.5" height="1" fill="#f08a28" opacity="0.90"/>
<rect x="336.5" y="153.3" width="0.8" height="1.5" fill="#ffd27a" opacity="0.74"/>
<rect x="336.9" y="148.6" width="1.5" height="1.5" fill="#ffd27a" opacity="0.70"/>
<rect x="397.0" y="134.2" width="0.8" height="1" fill="#ffd27a" opacity="0.85"/>
<rect x="386.4" y="133.6" width="1" height="1.5" fill="#f08a28" opacity="0.83"/>
<rect x="342.3" y="135.0" width="1.5" height="2" fill="#e07a20" opacity="0.73"/>
<rect x="387.7" y="143.1" width="1" height="1.5" fill="#f08a28" opacity="0.57"/>
<rect x="364.3" y="149.2" width="1" height="1" fill="#ffb347" opacity="0.36"/>
<rect x="323.2" y="175.3" width="1" height="1" fill="#ffb347" opacity="0.37"/>
<rect x="325.9" y="153.3" width="0.8" height="0.8" fill="#ffb347" opacity="0.39"/>
<rect x="364.8" y="140.0" width="0.8" height="2" fill="#ff9a2e" opacity="0.49"/>
<rect x="331.5" y="127.6" width="0.8" height="1.5" fill="#d9601e" opacity="0.40"/>
<rect x="322.4" y="160.3" width="1" height="1.5" fill="#e8742a" opacity="0.54"/>
<rect x="336.5" y="139.4" width="1" height="0.8" fill="#e8742a" opacity="0.85"/>
<rect x="380.2" y="151.1" width="1.5" height="1.5" fill="#7fc0e0" opacity="0.76"/>
<rect x="381.9" y="127.5" width="0.8" height="1.5" fill="#d9601e" opacity="0.74"/>
<rect x="360.3" y="134.2" width="0.8" height="1.5" fill="#ffa030" opacity="0.59"/>
<rect x="359.0" y="136.9" width="0.8" height="0.8" fill="#e8742a" opacity="0.62"/>
<rect x="356.3" y="163.0" width="1" height="2" fill="#7fc0e0" opacity="0.54"/>
<rect x="385.5" y="135.8" width="1" height="1.5" fill="#f08a28" opacity="0.87"/>
<rect x="333.9" y="132.3" width="0.8" height="2" fill="#e07a20" opacity="0.78"/>
<rect x="368.0" y="139.6" width="1.5" height="2" fill="#ff9a2e" opacity="0.58"/>
<rect x="369.5" y="140.3" width="1" height="1.5" fill="#fff0d0" opacity="0.85"/>
<rect x="357.1" y="140.6" width="1" height="2" fill="#ffa030" opacity="0.64"/>
<rect x="378.9" y="160.0" width="0.8" height="1.5" fill="#7fc0e0" opacity="0.53"/>
<rect x="327.4" y="166.7" width="1" height="1" fill="#d9601e" opacity="0.59"/>
<rect x="380.5" y="149.9" width="1" height="1.5" fill="#d9601e" opacity="0.70"/>
<rect x="373.9" y="146.4" width="1" height="1.5" fill="#7fc0e0" opacity="0.44"/>
<rect x="327.4" y="135.3" width="1" height="1.5" fill="#ffa030" opacity="0.48"/>
<rect x="396.2" y="135.8" width="0.8" height="1" fill="#ff8040" opacity="0.41"/>
<rect x="347.0" y="184.5" width="1" height="1.5" fill="#fff0d0" opacity="0.50"/>
<rect x="323.4" y="173.2" width="1" height="1" fill="#fff0d0" opacity="0.61"/>
<rect x="315.1" y="167.6" width="1.5" height="1" fill="#e07a20" opacity="0.89"/>
<rect x="339.5" y="127.1" width="1" height="2" fill="#ffb347" opacity="0.76"/>
<rect x="392.1" y="142.8" width="1.5" height="1" fill="#ff8040" opacity="0.75"/>
<rect x="389.7" y="161.4" width="1" height="1" fill="#ff8040" opacity="0.42"/>
<rect x="351.2" y="135.8" width="0.8" height="2" fill="#f08a28" opacity="0.78"/>
<rect x="375.3" y="152.5" width="1" height="2" fill="#d9601e" opacity="0.60"/>
<rect x="367.5" y="141.9" width="1" height="1.5" fill="#ffb347" opacity="0.56"/>
<rect x="356.1" y="182.4" width="0.8" height="1.5" fill="#e07a20" opacity="0.47"/>
<rect x="375.6" y="178.3" width="1" height="1.5" fill="#ff9a2e" opacity="0.82"/>
<rect x="353.3" y="133.7" width="1.5" height="0.8" fill="#ff8040" opacity="0.79"/>
<rect x="345.8" y="139.1" width="1.5" height="1" fill="#ff8040" opacity="0.45"/>
<rect x="358.2" y="175.8" width="1" height="0.8" fill="#ffd27a" opacity="0.50"/>
<rect x="348.4" y="126.6" width="1.5" height="2" fill="#ff8040" opacity="0.73"/>
<rect x="344.3" y="136.0" width="1" height="1.5" fill="#fff0d0" opacity="0.87"/>
<rect x="359.3" y="134.2" width="1.5" height="2" fill="#f08a28" opacity="0.44"/>
<rect x="393.9" y="128.8" width="1" height="2" fill="#ff8040" opacity="0.66"/>
<rect x="333.4" y="180.4" width="1" height="2" fill="#d9601e" opacity="0.90"/>
<rect x="379.4" y="153.6" width="1.5" height="1.5" fill="#f08a28" opacity="0.50"/>
<rect x="346.3" y="135.6" width="1.5" height="1" fill="#d9601e" opacity="0.35"/>
<rect x="376.1" y="136.6" width="1" height="1.5" fill="#e8742a" opacity="0.61"/>
<rect x="350.9" y="153.0" width="1" height="1" fill="#ffd27a" opacity="0.82"/>
<rect x="318.9" y="165.4" width="1" height="1" fill="#e07a20" opacity="0.81"/>
<rect x="368.5" y="126.7" width="0.8" height="1" fill="#ff9a2e" opacity="0.71"/>
<rect x="335.5" y="130.0" width="1" height="1" fill="#ffa030" opacity="0.78"/>
<rect x="343.8" y="131.8" width="1.5" height="1" fill="#7fc0e0" opacity="0.84"/>
<rect x="366.3" y="161.9" width="1" height="1" fill="#d9601e" opacity="0.73"/>
<rect x="359.6" y="159.2" width="1.5" height="0.8" fill="#e07a20" opacity="0.42"/>
<rect x="350.0" y="165.4" width="1.5" height="2" fill="#e07a20" opacity="0.38"/>
<rect x="354.2" y="131.5" width="1.5" height="1" fill="#d9601e" opacity="0.44"/>
<rect x="365.6" y="158.7" width="1" height="1.5" fill="#d9601e" opacity="0.73"/>
<rect x="356.8" y="137.2" width="1.5" height="1.5" fill="#fff0d0" opacity="0.58"/>
<rect x="396.6" y="129.1" width="1" height="0.8" fill="#ffb347" opacity="0.69"/>
<rect x="372.7" y="175.6" width="1" height="0.8" fill="#e07a20" opacity="0.62"/>
<rect x="379.1" y="131.5" width="1" height="2" fill="#ff8040" opacity="0.42"/>
<rect x="322.1" y="154.2" width="1" height="2" fill="#e07a20" opacity="0.65"/>
<rect x="392.5" y="136.8" width="1" height="2" fill="#ffd27a" opacity="0.65"/>
<rect x="385.1" y="137.1" width="1.5" height="2" fill="#e8742a" opacity="0.63"/>
<rect x="337.4" y="146.3" width="1" height="2" fill="#ff9a2e" opacity="0.53"/>
<rect x="341.3" y="137.3" width="0.8" height="0.8" fill="#fff0d0" opacity="0.75"/>
<rect x="390.2" y="148.2" width="0.8" height="2" fill="#ffd27a" opacity="0.41"/>
<rect x="318.0" y="164.9" width="1.5" height="0.8" fill="#e07a20" opacity="0.85"/>
<rect x="366.6" y="151.8" width="0.8" height="1" fill="#ffb347" opacity="0.72"/>
<rect x="353.4" y="160.6" width="0.8" height="1" fill="#ffb347" opacity="0.58"/>
<rect x="322.7" y="175.5" width="0.8" height="1.5" fill="#ffa030" opacity="0.78"/>
<rect x="362.3" y="135.7" width="1" height="1" fill="#fff0d0" opacity="0.37"/>
<rect x="315.8" y="149.2" width="0.8" height="2" fill="#7fc0e0" opacity="0.64"/>
<rect x="384.9" y="161.4" width="1.5" height="2" fill="#d9601e" opacity="0.39"/>
<rect x="372.5" y="150.6" width="1" height="2" fill="#fff0d0" opacity="0.65"/>
<rect x="321.1" y="144.7" width="1" height="0.8" fill="#fff0d0" opacity="0.35"/>
<rect x="372.8" y="130.7" width="0.8" height="1" fill="#ff9a2e" opacity="0.42"/>
<rect x="315.5" y="157.8" width="1" height="2" fill="#ffa030" opacity="0.86"/>
<rect x="345.5" y="159.6" width="1" height="0.8" fill="#ffd27a" opacity="0.70"/>
<rect x="375.0" y="144.2" width="1" height="0.8" fill="#ffb347" opacity="0.36"/>
<rect x="315.3" y="153.7" width="0.8" height="2" fill="#ffd27a" opacity="0.52"/>
<rect x="365.6" y="179.3" width="1.5" height="0.8" fill="#e8742a" opacity="0.55"/>
<rect x="363.4" y="143.2" width="1" height="1" fill="#ff9a2e" opacity="0.55"/>
<rect x="369.5" y="152.5" width="1.5" height="2" fill="#fff0d0" opacity="0.78"/>
<rect x="352.9" y="136.3" width="1" height="1.5" fill="#ffd27a" opacity="0.38"/>
<rect x="397.8" y="156.8" width="1" height="0.8" fill="#ffa030" opacity="0.68"/>
<rect x="340.5" y="142.7" width="1" height="2" fill="#fff0d0" opacity="0.73"/>
<rect x="365.8" y="171.6" width="1.5" height="1.5" fill="#ffb347" opacity="0.53"/>
<rect x="337.0" y="132.0" width="0.8" height="1.5" fill="#ffa030" opacity="0.80"/>
<rect x="388.6" y="149.5" width="1" height="2" fill="#e8742a" opacity="0.64"/>
<rect x="360.4" y="145.3" width="1.5" height="1" fill="#f08a28" opacity="0.52"/>
<rect x="319.0" y="141.3" width="1" height="1.5" fill="#7fc0e0" opacity="0.76"/>
<rect x="382.1" y="144.1" width="0.8" height="1.5" fill="#ff9a2e" opacity="0.48"/>
<rect x="363.8" y="171.7" width="1" height="2" fill="#e07a20" opacity="0.67"/>
<rect x="330.3" y="133.3" width="1" height="1.5" fill="#e8742a" opacity="0.67"/>
<rect x="344.9" y="161.8" width="1" height="1" fill="#ffb347" opacity="0.86"/>
<rect x="356.4" y="168.7" width="1" height="2" fill="#ff9a2e" opacity="0.44"/>
<rect x="365.4" y="139.2" width="0.8" height="0.8" fill="#ffb347" opacity="0.46"/>
<rect x="388.9" y="149.2" width="1" height="1.5" fill="#ffd27a" opacity="0.58"/>
<rect x="395.4" y="160.9" width="1" height="1.5" fill="#ffb347" opacity="0.54"/>
<rect x="399.5" y="140.6" width="0.8" height="0.8" fill="#ffb347" opacity="0.66"/>
<rect x="388.9" y="144.1" width="0.8" height="2" fill="#ff9a2e" opacity="0.74"/>
<rect x="321.7" y="138.1" width="1" height="0.8" fill="#ff8040" opacity="0.63"/>
<rect x="329.7" y="167.2" width="1" height="1" fill="#f08a28" opacity="0.44"/>
<rect x="395.0" y="176.9" width="0.8" height="0.8" fill="#ffb347" opacity="0.49"/>
<rect x="358.1" y="159.1" width="1.5" height="0.8" fill="#ff9a2e" opacity="0.43"/>
<rect x="378.9" y="176.6" width="1" height="2" fill="#ff8040" opacity="0.41"/>
<rect x="341.9" y="135.7" width="0.8" height="1.5" fill="#d9601e" opacity="0.56"/>
<rect x="352.0" y="163.8" width="0.8" height="2" fill="#f08a28" opacity="0.79"/>
<rect x="327.5" y="165.8" width="0.8" height="1.5" fill="#ffa030" opacity="0.78"/>
<rect x="396.4" y="174.9" width="1.5" height="0.8" fill="#ff8040" opacity="0.39"/>
<rect x="397.6" y="138.3" width="1" height="2" fill="#ff9a2e" opacity="0.70"/>
<rect x="326.3" y="134.3" width="0.8" height="1" fill="#d9601e" opacity="0.65"/>
<rect x="326.4" y="169.1" width="1" height="2" fill="#fff0d0" opacity="0.49"/>
<rect x="316.2" y="149.5" width="1" height="1.5" fill="#ffa030" opacity="0.49"/>
<rect x="323.4" y="144.0" width="1.5" height="0.8" fill="#ffa030" opacity="0.89"/>
<rect x="318.9" y="171.5" width="1" height="2" fill="#ffd27a" opacity="0.42"/>
<rect x="378.9" y="181.6" width="1.5" height="1.5" fill="#f08a28" opacity="0.86"/>
<rect x="322.4" y="137.0" width="1" height="0.8" fill="#ffd27a" opacity="0.43"/>
<rect x="369.0" y="143.3" width="1" height="1" fill="#d9601e" opacity="0.35"/>
<rect x="385.6" y="147.3" width="1" height="1.5" fill="#fff0d0" opacity="0.37"/>
<rect x="349.2" y="136.5" width="1" height="1" fill="#ffa030" opacity="0.64"/>
<rect x="333.8" y="132.6" width="0.8" height="0.8" fill="#7fc0e0" opacity="0.75"/>
<rect x="379.5" y="132.6" width="1" height="1" fill="#7fc0e0" opacity="0.52"/>
<rect x="314.9" y="156.1" width="1.5" height="0.8" fill="#e07a20" opacity="0.80"/>
<rect x="342.8" y="166.6" width="1.5" height="0.8" fill="#ffb347" opacity="0.58"/>
<rect x="379.6" y="131.1" width="1" height="1" fill="#ffa030" opacity="0.66"/>
<rect x="398.8" y="127.7" width="1" height="0.8" fill="#e8742a" opacity="0.64"/>
<rect x="352.3" y="146.7" width="0.8" height="1.5" fill="#f08a28" opacity="0.80"/>
<rect x="388.4" y="138.2" width="1.5" height="0.8" fill="#ffd27a" opacity="0.83"/>
<rect x="396.0" y="145.7" width="0.8" height="1" fill="#ffb347" opacity="0.48"/>
<rect x="321.6" y="152.0" width="1" height="0.8" fill="#ffd27a" opacity="0.49"/>
<rect x="384.3" y="127.5" width="0.8" height="1" fill="#ffd27a" opacity="0.36"/>
<rect x="365.5" y="149.7" width="1" height="2" fill="#ff9a2e" opacity="0.54"/>
<rect x="322.1" y="132.8" width="1" height="0.8" fill="#d9601e" opacity="0.62"/>
<rect x="357.1" y="136.6" width="0.8" height="0.8" fill="#fff0d0" opacity="0.84"/>
<rect x="360.6" y="134.6" width="1" height="1" fill="#ff8040" opacity="0.67"/>
<rect x="378.2" y="132.2" width="0.8" height="2" fill="#fff0d0" opacity="0.68"/>
<rect x="365.8" y="127.7" width="0.8" height="1.5" fill="#e8742a" opacity="0.57"/>
<rect x="386.1" y="157.5" width="1" height="2" fill="#e07a20" opacity="0.38"/>
<rect x="358.5" y="179.4" width="1" height="1" fill="#fff0d0" opacity="0.71"/>
<rect x="315.0" y="130.2" width="1" height="0.8" fill="#e8742a" opacity="0.59"/>
<rect x="357.4" y="127.1" width="1" height="2" fill="#fff0d0" opacity="0.78"/>
<rect x="394.6" y="152.7" width="0.8" height="0.8" fill="#ff8040" opacity="0.69"/>
<rect x="392.9" y="152.2" width="0.8" height="0.8" fill="#ffd27a" opacity="0.42"/>
<rect x="315.2" y="134.9" width="0.8" height="1.5" fill="#ff9a2e" opacity="0.52"/>
<rect x="369.7" y="130.6" width="1" height="0.8" fill="#d9601e" opacity="0.67"/>
<rect x="394.1" y="143.2" width="1" height="1.5" fill="#fff0d0" opacity="0.67"/>
<rect x="337.6" y="158.8" width="1" height="2" fill="#7fc0e0" opacity="0.73"/>
<rect x="333.1" y="140.9" width="1" height="2" fill="#e07a20" opacity="0.52"/>
<rect x="355.1" y="164.7" width="0.8" height="1" fill="#e8742a" opacity="0.47"/>
<rect x="358.1" y="140.8" width="1.5" height="0.8" fill="#e8742a" opacity="0.44"/>
<rect x="395.9" y="138.3" width="1" height="2" fill="#ffd27a" opacity="0.51"/>
<rect x="398.9" y="137.2" width="0.8" height="1" fill="#e07a20" opacity="0.39"/>
<rect x="388.9" y="143.2" width="0.8" height="2" fill="#d9601e" opacity="0.54"/>
<rect x="379.6" y="147.0" width="1" height="2" fill="#e8742a" opacity="0.72"/>
<rect x="326.1" y="133.6" width="1" height="0.8" fill="#d9601e" opacity="0.50"/>
<rect x="368.2" y="152.7" width="1" height="2" fill="#ff9a2e" opacity="0.35"/>
<rect x="379.8" y="150.2" width="1.5" height="2" fill="#7fc0e0" opacity="0.43"/>
<rect x="387.1" y="136.6" width="0.8" height="2" fill="#d9601e" opacity="0.73"/>
<rect x="338.8" y="139.5" width="1" height="2" fill="#e07a20" opacity="0.66"/>
<rect x="347.1" y="138.3" width="1.5" height="2" fill="#d9601e" opacity="0.52"/>
<rect x="360.2" y="163.5" width="1.5" height="2" fill="#7fc0e0" opacity="0.48"/>
<rect x="384.7" y="138.6" width="1" height="1.5" fill="#f08a28" opacity="0.88"/>
<rect x="390.6" y="179.0" width="0.8" height="0.8" fill="#ffd27a" opacity="0.66"/>
<rect x="356.8" y="174.2" width="1" height="2" fill="#e07a20" opacity="0.80"/>
<rect x="376.5" y="142.8" width="1.5" height="1.5" fill="#ffb347" opacity="0.68"/>
<rect x="344.2" y="177.8" width="0.8" height="1" fill="#ff9a2e" opacity="0.58"/>
<rect x="357.1" y="153.6" width="1" height="1" fill="#fff0d0" opacity="0.62"/>
<rect x="351.9" y="152.3" width="1" height="0.8" fill="#ffa030" opacity="0.55"/>
<rect x="345.5" y="129.1" width="1" height="1" fill="#ff9a2e" opacity="0.71"/>
<rect x="339.4" y="139.1" width="1.5" height="1" fill="#e07a20" opacity="0.51"/>
<rect x="358.0" y="146.2" width="1" height="2" fill="#ffa030" opacity="0.38"/>
<rect x="362.6" y="130.2" width="0.8" height="2" fill="#ffb347" opacity="0.78"/>
<rect x="340.4" y="156.0" width="0.8" height="1.5" fill="#fff0d0" opacity="0.81"/>
<rect x="364.4" y="154.7" width="1" height="1" fill="#d9601e" opacity="0.77"/>
<rect x="362.8" y="169.1" width="1" height="1" fill="#fff0d0" opacity="0.68"/>
<rect x="326.5" y="146.9" width="0.8" height="0.8" fill="#ff9a2e" opacity="0.39"/>
<rect x="395.5" y="145.5" width="1.5" height="2" fill="#ffb347" opacity="0.71"/>
<rect x="372.9" y="149.9" width="1" height="1" fill="#e8742a" opacity="0.50"/>
<rect x="316.8" y="152.5" width="0.8" height="1.5" fill="#f08a28" opacity="0.60"/>
<rect x="347.2" y="128.4" width="1.5" height="0.8" fill="#d9601e" opacity="0.38"/>
<rect x="334.5" y="134.4" width="1" height="1" fill="#e8742a" opacity="0.35"/>
<rect x="388.6" y="143.9" width="1.5" height="1.5" fill="#d9601e" opacity="0.89"/>
<rect x="319.8" y="155.2" width="1" height="2" fill="#ffd27a" opacity="0.57"/>
<rect x="375.2" y="127.1" width="1" height="0.8" fill="#ffa030" opacity="0.44"/>
<rect x="346.6" y="126.2" width="1" height="2" fill="#e07a20" opacity="0.55"/>
<rect x="342.8" y="169.2" width="1" height="2" fill="#ff8040" opacity="0.39"/>
<rect x="324.6" y="165.3" width="1" height="1" fill="#fff0d0" opacity="0.46"/>
<rect x="338.4" y="134.9" width="0.8" height="1.5" fill="#ff8040" opacity="0.36"/>
<rect x="383.2" y="135.1" width="1" height="0.8" fill="#f08a28" opacity="0.50"/>
<rect x="385.8" y="130.9" width="1.5" height="2" fill="#f08a28" opacity="0.44"/>
<rect x="344.4" y="158.0" width="1.5" height="1" fill="#ffd27a" opacity="0.87"/>
<rect x="357.4" y="134.6" width="1.5" height="1" fill="#ffd27a" opacity="0.68"/>
<rect x="351.9" y="186.3" width="1" height="2" fill="#7fc0e0" opacity="0.63"/>
<rect x="324.8" y="159.8" width="0.8" height="1.5" fill="#fff0d0" opacity="0.37"/>
<rect x="375.8" y="131.5" width="0.8" height="2" fill="#ff9a2e" opacity="0.73"/>
<rect x="380.7" y="134.7" width="1" height="0.8" fill="#ff9a2e" opacity="0.66"/>
<rect x="345.1" y="146.0" width="1" height="1" fill="#ff9a2e" opacity="0.75"/>
<rect x="321.6" y="136.9" width="1.5" height="1.5" fill="#e8742a" opacity="0.57"/>
<rect x="392.2" y="161.5" width="1" height="1.5" fill="#ffa030" opacity="0.37"/>
<rect x="372.4" y="154.4" width="1" height="2" fill="#ffb347" opacity="0.71"/>
<rect x="374.1" y="135.4" width="1.5" height="1.5" fill="#ff8040" opacity="0.40"/>
<rect x="339.1" y="136.2" width="1" height="0.8" fill="#fff0d0" opacity="0.37"/>
<rect x="327.9" y="133.5" width="1" height="1" fill="#fff0d0" opacity="0.76"/>
<rect x="361.5" y="152.5" width="1" height="1" fill="#7fc0e0" opacity="0.62"/>
<rect x="358.8" y="174.9" width="1" height="0.8" fill="#ff9a2e" opacity="0.81"/>
<rect x="380.8" y="136.8" width="0.8" height="0.8" fill="#f08a28" opacity="0.72"/>
<rect x="317.2" y="138.1" width="1" height="0.8" fill="#fff0d0" opacity="0.73"/>
<rect x="347.9" y="159.6" width="1" height="1.5" fill="#e07a20" opacity="0.40"/>
<rect x="395.4" y="142.5" width="1" height="2" fill="#e07a20" opacity="0.38"/>
<rect x="374.0" y="142.7" width="1" height="2" fill="#f08a28" opacity="0.37"/>
<rect x="374.4" y="163.7" width="1" height="1" fill="#e07a20" opacity="0.44"/>
<rect x="381.2" y="134.9" width="1" height="1" fill="#ffb347" opacity="0.44"/>
<rect x="343.9" y="129.7" width="1" height="1" fill="#ffa030" opacity="0.73"/>
<rect x="318" y="163" width="7" height="30" fill="#4a3a3a" opacity=".9"/>
<rect x="326" y="165" width="5" height="28" fill="#3a2a2a" opacity=".9"/>
<rect x="333" y="160" width="8" height="33" fill="#2a2228" opacity=".9"/>
<rect x="362" y="146" width="6" height="26" fill="#6a5560" opacity=".9"/>
<rect x="371" y="141" width="9" height="52" fill="#1f2330" opacity=".9"/>
<rect x="384" y="150" width="8" height="43" fill="#2a2026" opacity=".9"/>
<rect x="340" y="182" width="16" height="11" fill="#1c2030" opacity=".9"/>
<rect x="392" y="160" width="8" height="33" fill="#33262a" opacity=".9"/>
<rect x="370" y="157" width="2" height="14" fill="#dfe8f0" opacity=".85"/>
<rect x="360" y="170" width="5" height="20" fill="#d8782a" opacity=".85"/>
<rect x="357" y="174" width="2" height="16" fill="#f0a048" opacity=".85"/>
<rect x="321" y="166" width="1.5" height="24" fill="#c9a070" opacity=".85"/>
<rect x="329" y="168" width="1.5" height="22" fill="#b58a5a" opacity=".85"/>
<rect x="385" y="172" width="2" height="10" fill="#ffd080" opacity=".85"/>
<rect x="364" y="150" width="2" height="10" fill="#bfa0a8" opacity=".85"/>
</g>
</svg>
<div id="photobtn"><svg width="76" height="72" viewBox="0 0 76 72"><rect width="76" height="72" fill="#2d2b28"/><g opacity=".55"><rect x="38" y="34" width="10" height="38" fill="#5a5348"/><rect x="50" y="38" width="7" height="34" fill="#4a463e"/><rect x="22" y="40" width="9" height="32" fill="#3f3c36"/><rect x="60" y="36" width="8" height="36" fill="#35332f"/><rect x="14" y="33" width="62" height="5" fill="#45433e"/></g></svg><span>張相片</span></div>
</div>
<div id="search">
<svg class="abs" style="left:16px;top:12px" width="24" height="24" viewBox="0 0 24 24"><path fill="#3f3f3f" d="M3 18h18v-2H3v2zm0-5h18v-2H3v2zm0-7v2h18V6H3z"/></svg>
<div class="q">7, Section 5, Xinyi Rd, Xinyi District</div>
<div class="fade"></div>
<svg class="abs" style="left:298.500px;top:11.300px" width="25.500" height="25.500" viewBox="0 0 24 24"><path fill="#838383" d="M15.500 14h-.790l-.280-.270C15.410 12.590 16 11.110 16 9.500 16 5.910 13.090 3 9.500 3S3 5.910 3 9.500 5.910 16 9.500 16c1.610 0 3.090-.590 4.230-1.570l.270.280v.790l5 4.990L20.490 19l-4.990-5zm-6 0C7.010 14 5 11.990 5 9.500S7.010 5 9.500 5 14 7.010 14 9.500 11.990 14 9.500 14z"/></svg>
<div class="sep"></div>
<svg class="abs" style="left:353px;top:12px" width="24" height="24" viewBox="0 0 24 24"><path fill="#838383" d="M19 6.410L17.590 5 12 10.590 6.410 5 5 6.410 10.590 12 5 17.590 6.410 19 12 13.410 17.590 19 19 17.590 13.410 12z"/></svg>
</div>
<div id="collapse"><i></i></div>
<div id="satthumb">
<svg width="74" height="74" viewBox="0 0 74 74">
<defs><linearGradient id="sg" x1="0" y1="0" x2="0" y2="1"><stop offset="0" stop-color="#7b7e79"/><stop offset=".5" stop-color="#686c68"/><stop offset=".72" stop-color="#4f504e"/><stop offset="1" stop-color="#414140"/></linearGradient><filter id="sb" x="-10%" y="-10%" width="120%" height="120%"><feGaussianBlur stdDeviation=".9"/></filter>
<filter id="sn" x="0" y="0" width="100%" height="100%"><feTurbulence type="fractalNoise" baseFrequency=".28" numOctaves="2" seed="4" result="n"/><feColorMatrix in="n" type="matrix" values="0 0 0 0 0  0 0 0 0 0  0 0 0 0 0  1.600 0 0 0 -.550"/></filter>
<filter id="sn2" x="0" y="0" width="100%" height="100%"><feTurbulence type="fractalNoise" baseFrequency=".22" numOctaves="2" seed="11" result="n"/><feColorMatrix in="n" type="matrix" values="0 0 0 0 1  0 0 0 0 1  0 0 0 0 1  1.400 0 0 0 -.600"/></filter></defs>
<rect width="74" height="74" fill="url(#sg)"/>
<g filter="url(#sb)">
<rect x="20" y="2" width="52" height="14" fill="#858983"/>
<rect x="0" y="0" width="12" height="9" fill="#4a4a48"/><circle cx="5" cy="4" r="3" fill="#a6a6a4"/>
<rect x="0" y="18" width="14" height="10" fill="#6a9388"/>
<rect x="0" y="38" width="16" height="14" fill="#6c9086"/>
<rect x="4" y="27" width="9" height="10" fill="#3c5550"/>
<rect x="30" y="20" width="30" height="16" fill="#90969a"/>
<rect x="14" y="12" width="14" height="12" fill="#5a5e5a"/>
<path d="M26,14 h8 v5 h10" fill="none" stroke="#d0d2d0" stroke-width="1.300"/>
<path d="M58,19 h16" fill="none" stroke="#d0d2d0" stroke-width="1.300"/>
<path d="M18,28 v12 M22,27 v15 M26,27 v17 M30,27 v19 M34,28 v19 M38,28 v20 M42,29 v20 M46,30 v19" stroke="#a9bcc0" stroke-width="1.700"/>
<path d="M20,28 v13 M24,27 v16 M28,27 v18 M32,28 v18 M36,28 v19 M40,29 v19 M44,30 v19" stroke="#3f5560" stroke-width="1.500"/>
<rect x="48" y="32" width="18" height="18" fill="#4a6a74"/>
<path d="M52,33 v15 M56,33 v15 M60,34 v14" stroke="#7e9ea6" stroke-width="1.200"/>
<path d="M17,42 C24,50 40,52 50,49 L46,45 C36,48 26,46 20,40 z" fill="#161a26"/>
<rect x="0" y="54" width="74" height="20" fill="#3c3c3b" opacity=".55"/>
</g>
<rect width="74" height="74" filter="url(#sn)" opacity=".3"/>
<rect width="74" height="74" filter="url(#sn2)" opacity=".13"/>
</svg>
<span>衛星</span>
</div>
<div id="botstrip"></div>

<div id="dlg">
<div class="hd"><h1>選取語言</h1><svg width="24" height="24" viewBox="0 0 24 24"><path fill="#1f1f1f" d="M19 6.410L17.590 5 12 10.590 6.410 5 5 6.410 10.590 12 5 17.590 6.410 19 12 13.410 17.590 19 19 17.590 13.410 12z"/></svg></div>
<ul style="left:103.5px">
<li>Afrikaans</li>
<li>azərbaycan</li>
<li>Bahasa Indonesia</li>
<li>Bahasa Melayu</li>
<li>bosanski</li>
<li>català</li>
<li>Čeština</li>
<li>Dansk</li>
<li>Deutsch (Deutschland)</li>
<li>eesti</li>
<li><a>English (United States)</a></li>
<li>Español (España)</li>
<li>Español (Latinoamérica)</li>
<li>euskara</li>
<li>Filipino</li>
</ul>
<ul style="left:253.5px">
<li>Français (France)</li>
<li>galego</li>
<li>Hrvatski</li>
<li>isiZulu</li>
<li>íslenska</li>
<li>Italiano</li>
<li>Kiswahili</li>
<li>latviešu</li>
<li>lietuvių</li>
<li>magyar</li>
<li>Nederlands</li>
<li>norsk</li>
<li>oʻzbekcha</li>
<li>polski</li>
<li>Português (Brasil)</li>
</ul>
<ul style="left:403.5px">
<li>Português (Portugal)</li>
<li>română</li>
<li>shqip</li>
<li>Slovenčina</li>
<li>slovenščina</li>
<li>Suomi</li>
<li>Svenska</li>
<li>Tiếng Việt</li>
<li>Türkçe</li>
<li>Ελληνικά</li>
<li>български</li>
<li>кыргызча</li>
<li>қазақ тілі</li>
<li>македонски</li>
<li>монгол</li>
</ul>
<ul style="left:553.5px">
<li>Русский</li>
<li>српски (ћирилица)</li>
<li>Українська</li>
<li>ქართული</li>
<li><span style="font-size:11.2px">հայերեն</span></li>
<li>עברית</li>
<li><span style="font-size:11px">اردو</span></li>
<li><span style="font-size:10px">العربية</span></li>
<li><span style="font-size:9.500px">فارسی</span></li>
<li>አማርኛ</li>
<li>नेपाली</li>
<li>हिन्दी</li>
<li>मराठी</li>
<li>বাংলা</li>
<li>ਪੰਜਾਬੀ</li>
</ul>
<ul style="left:703.5px">
<li>ગુજરાતી</li>
<li>தமிழ்</li>
<li>తెలుగు</li>
<li>ಕನ್ನಡ</li>
<li>മലയാളം</li>
<li>සිංහල</li>
<li>ไทย</li>
<li>ລາວ</li>
<li>ဗမာ</li>
<li>ខ្មែរ</li>
<li>한국어</li>
<li>日本語</li>
<li>简体中文</li>
<li class="cur">繁體中文</li>
</ul>
</div>
<div id="menu">
<div class="sb"><div class="up"></div><div class="th"></div></div>
<div id="glogo"><b style="color:#4285f4">G</b><b style="color:#ea4335">o</b><b style="color:#fbbc05">o</b><b style="color:#4285f4">g</b><b style="color:#34a853">l</b><b style="color:#ea4335">e</b></div>
<svg class="abs" style="left:256px;top:18px" width="18" height="14" viewBox="0 0 18 14"><path d="M8.500 2.500L3.800 7.200l4.700 4.700M14.700 2.500L10 7.200l4.700 4.700" fill="none" stroke="#757575" stroke-width="1.500"/></svg>
<div class="hr" style="top:52px"></div>
<div class="hr" style="top:181px"></div>
<div class="hr" style="top:382px"></div>
<div class="hr" style="top:654px"></div>
<div class="row sel" style="top:62px"><svg style="left:19.700px;top:6.800px" width="24.600" height="24.600" viewBox="0 0 24 24"><path fill="#4285f4" d="M20.5 3l-.16.03L15 5.1 9 3 3.36 4.9c-.21.07-.36.25-.36.48V20.5c0 .28.22.5.5.5l.16-.03L9 18.9l6 2.1 5.64-1.9c.21-.07.36-.25.36-.48V3.500c0-.28-.22-.5-.5-.5zM15 19l-6-2.110V5l6 2.110V19z"/></svg><span>地圖</span></div>
<div class="row " style="top:98px"><svg style="left:20px;top:6.5px" width="24" height="24" viewBox="0 0 24 24"><path fill="#616161" d="M19 3H5c-1.100 0-2 .9-2 2v14c0 1.100.9 2 2 2h14c1.100 0 2-.9 2-2V5c0-1.100-.9-2-2-2zM5 4.990h3C8 6.650 6.660 8 5 8V4.990zM5 12v-2c2.760 0 5-2.250 5-5.010h2C12 8.860 8.870 12 5 12zm0 6l3.500-4.500 2.500 3.010L14.500 12l4.500 6H5z"/></svg><span>衛星</span></div>
<div class="row " style="top:134px"><svg style="left:20px;top:6.5px" width="24" height="24" viewBox="0 0 24 24"><path fill="#616161" d="M14 6l-3.750 5 2.850 3.800-1.600 1.200C9.810 13.750 7 10 7 10l-6 8h22L14 6z"/></svg><span>地形</span></div>
<div class="row " style="top:191px"><svg style="left:20px;top:6.5px" width="24" height="24" viewBox="0 0 24 24"><path fill="#616161" d="M11.990 2C6.470 2 2 6.480 2 12s4.470 10 9.990 10C17.520 22 22 17.520 22 12S17.520 2 11.990 2zm6.930 6h-2.950c-.320-1.250-.780-2.450-1.380-3.560 1.840.630 3.370 1.910 4.330 3.560zM12 4.040c.830 1.200 1.480 2.530 1.910 3.960h-3.820c.430-1.430 1.080-2.760 1.910-3.960zM4.260 14C4.100 13.360 4 12.690 4 12s.100-1.360.260-2h3.380c-.080.660-.140 1.320-.140 2 0 .680.060 1.340.140 2H4.260zm.820 2h2.950c.320 1.250.780 2.450 1.380 3.560-1.840-.630-3.370-1.900-4.330-3.560zm2.950-8H5.080c.960-1.660 2.490-2.930 4.330-3.560C8.810 5.550 8.350 6.750 8.030 8zM12 19.960c-.830-1.200-1.480-2.530-1.910-3.960h3.820c-.430 1.430-1.080 2.760-1.910 3.960zM14.340 14H9.660c-.090-.660-.160-1.320-.160-2 0-.680.070-1.350.160-2h4.680c.090.650.160 1.320.160 2 0 .680-.070 1.340-.160 2zm.250 5.560c.600-1.110 1.060-2.310 1.380-3.560h2.950c-.960 1.650-2.490 2.930-4.330 3.560zM16.360 14c.080-.660.140-1.320.140-2 0-.680-.060-1.340-.140-2h3.380c.160.640.260 1.310.260 2s-.100 1.360-.260 2h-3.380z"/></svg><span>地球</span></div>
<div class="row " style="top:227px"><svg style="left:20px;top:6.5px" width="24" height="24" viewBox="0 0 24 24"><path fill="#616161" d="M20 10h-3V8.860c1.720-.450 3-2 3-3.860h-3V4c0-.550-.450-1-1-1H8c-.550 0-1 .450-1 1v1H4c0 1.860 1.280 3.410 3 3.860V10H4c0 1.860 1.280 3.410 3 3.860V15H4c0 1.860 1.280 3.410 3 3.860V20c0 .550.450 1 1 1h8c.550 0 1-.450 1-1v-1.140c1.720-.450 3-2 3-3.860h-3v-1.140c1.720-.450 3-2 3-3.860zm-8 9c-1.110 0-2-.900-2-2s.890-2 2-2c1.100 0 2 .900 2 2s-.890 2-2 2zm0-5c-1.110 0-2-.900-2-2s.890-2 2-2c1.100 0 2 .900 2 2s-.890 2-2 2zm0-5c-1.110 0-2-.900-2-2 0-1.110.890-2 2-2 1.100 0 2 .890 2 2 0 1.100-.890 2-2 2z"/></svg><span>路況</span></div>
<div class="row " style="top:263px"><svg style="left:20px;top:6.5px" width="24" height="24" viewBox="0 0 24 24"><path fill="#616161" d="M12 2c-4.420 0-8 .500-8 4v9.500C4 17.430 5.570 19 7.500 19L6 20.500v.500h12v-.500L16.500 19c1.930 0 3.500-1.570 3.500-3.500V6c0-3.500-3.580-4-8-4zM7.500 17c-.830 0-1.500-.670-1.500-1.500S6.670 14 7.500 14s1.500.670 1.500 1.500S8.330 17 7.500 17zm3.500-7H6V6h5v4zm5.500 7c-.830 0-1.500-.670-1.500-1.500s.670-1.500 1.500-1.500 1.500.670 1.500 1.500-.670 1.500-1.500 1.500zm1.500-7h-5V6h5v4z"/></svg><span>大眾運輸</span></div>
<div class="row " style="top:299px"><svg style="left:19.700px;top:6.300px" width="24.600" height="24.600" viewBox="0 0 24 24"><path fill="#616161" d="M15.500 5.500c1.100 0 2-.900 2-2s-.900-2-2-2-2 .900-2 2 .900 2 2 2zM5 12c-2.800 0-5 2.200-5 5s2.200 5 5 5 5-2.200 5-5-2.200-5-5-5zm0 8.500c-1.900 0-3.500-1.600-3.500-3.500s1.600-3.500 3.500-3.500 3.500 1.600 3.500 3.500-1.600 3.500-3.500 3.500zm5.800-10l2.400-2.400.8.800c1.300 1.300 3 2.100 5.100 2.100V9c-1.500 0-2.700-.600-3.600-1.500l-1.900-1.900c-.500-.400-1-.600-1.600-.600s-1.100.200-1.400.600L7.800 8.400c-.400.400-.600.900-.600 1.400 0 .600.200 1.100.600 1.400L11 14v5h2v-6.200l-2.200-2.300zM19 12c-2.800 0-5 2.200-5 5s2.200 5 5 5 5-2.200 5-5-2.200-5-5-5zm0 8.500c-1.900 0-3.500-1.600-3.500-3.500s1.600-3.500 3.500-3.500 3.500 1.600 3.500 3.500-1.600 3.500-3.500 3.500z"/></svg><span>單車路線</span></div>
<div class="row " style="top:335px"><svg style="left:20.300px;top:6px" width="24" height="26" viewBox="0 0 24 26"><circle cx="12" cy="5.300" r="4" fill="#616161"/><path fill="#616161" d="M7.200 10.300h9.600c.800 0 1.300.600 1.300 1.400l-.900 7.300h-1.500l-.600-4.300-.700 9.800h-1.700L12 17.500l-.700 7h-1.700l-.700-9.800-.600 4.300H6.800l-.900-7.300c0-.800.500-1.400 1.300-1.400z"/><path fill="#fff" d="M11.300 10.300h1.400l.500 1-1.200 3.600-1.200-3.600z"/></svg><span>街景</span></div>
<div class="row " style="top:392px"><svg style="left:20.200px;top:7.300px" width="24.400" height="24.400" viewBox="0 0 24 24"><circle cx="9" cy="8" r="4" fill="#616161"/><path fill="#616161" d="M9 14c-2.670 0-8 1.340-8 4v2h16v-2c0-2.660-5.330-4-8-4z"/><path fill="#616161" d="M15.080 7.050c.840 1.180.840 2.710 0 3.890l1.680 1.690c2.020-2.020 2.020-5.070 0-7.270l-1.680 1.690zM20.070 2l-1.630 1.630c2.770 3.020 2.770 7.560 0 10.740L20.070 16c3.900-3.890 3.910-9.950 0-14z"/></svg><span>位置資訊分享</span></div>
<div class="row " style="top:428px"><svg style="left:20px;top:6.5px" width="24" height="24" viewBox="0 0 24 24"><path fill="#616161" d="M12 2C8.130 2 5 5.130 5 9c0 5.250 7 13 7 13s7-7.750 7-13c0-3.870-3.130-7-7-7zm0 9.500c-1.380 0-2.500-1.120-2.500-2.500s1.120-2.500 2.500-2.500 2.500 1.120 2.500 2.500-1.120 2.500-2.500 2.500z"/></svg><span>你的地點</span></div>
<div class="row " style="top:464px"><svg style="left:20px;top:7px" width="24" height="24" viewBox="0 0 24 24"><path fill="#616161" d="M20 2H4c-1.100 0-1.990.900-1.990 2L2 22l4-4h14c1.100 0 2-.900 2-2V4c0-1.100-.900-2-2-2zM6 14v-2.470l6.880-6.880c.200-.200.510-.200.710 0l1.770 1.770c.200.200.200.510 0 .710L8.470 14H6zm12 0h-7.500l2-2H18v2z"/></svg><span>你的貢獻</span></div>
<div class="row " style="top:500px"><svg style="left:20px;top:7px" width="24" height="24" viewBox="0 0 24 24"><path fill="#616161" d="M23 8c0 1.100-.900 2-2 2-.180 0-.350-.020-.510-.070l-3.560 3.550c.050.160.070.340.070.520 0 1.100-.900 2-2 2s-2-.900-2-2c0-.180.020-.360.070-.520l-2.550-2.550c-.160.050-.340.070-.520.070s-.360-.020-.520-.070l-4.550 4.560c.050.160.070.330.070.510 0 1.100-.900 2-2 2s-2-.900-2-2 .900-2 2-2c.180 0 .350.020.510.070l4.560-4.550C8.020 9.360 8 9.180 8 9c0-1.100.900-2 2-2s2 .900 2 2c0 .180-.020.360-.070.520l2.550 2.550c.160-.050.340-.070.520-.070s.360.020.520.070l3.550-3.560C19.020 8.350 19 8.180 19 8c0-1.100.900-2 2-2s2 .900 2 2z"/></svg><span>你的時間軸</span></div>
<div class="row " style="top:536px"><svg style="left:20px;top:7px" width="24" height="24" viewBox="0 0 24 24"><path fill="#616161" d="M3.900 12c0-1.710 1.390-3.100 3.100-3.100h4V7H7c-2.760 0-5 2.240-5 5s2.240 5 5 5h4v-1.900H7c-1.710 0-3.100-1.390-3.100-3.100zM8 13h8v-2H8v2zm9-6h-4v1.900h4c1.710 0 3.100 1.390 3.100 3.100s-1.390 3.100-3.100 3.100h-4V17h4c2.760 0 5-2.240 5-5s-2.240-5-5-5z"/></svg><span>分享或嵌入地圖</span></div>
<div class="row " style="top:572px"><svg style="left:20px;top:6.5px" width="24" height="24" viewBox="0 0 24 24"><path fill="#616161" d="M19 8H5c-1.660 0-3 1.340-3 3v6h4v4h12v-4h4v-6c0-1.660-1.340-3-3-3zm-3 11H8v-5h8v5zm3-7c-.550 0-1-.450-1-1s.450-1 1-1 1 .450 1 1-.450 1-1 1zm-1-9H6v4h12V3z"/></svg><span>列印</span></div>
<div class="row " style="top:608px"><svg style="left:20px;top:6.500px" width="24" height="24" viewBox="0 0 24 24"><path fill="#616161" d="M12 1L3 5v6c0 5.550 3.840 10.740 9 12 5.160-1.260 9-6.450 9-12V5l-9-4z"/><circle cx="12" cy="11.500" r="5.600" fill="#fff"/><circle cx="12" cy="11.500" r="4.300" fill="#616161"/><circle cx="12" cy="10" r="1.700" fill="#fff"/><path fill="#fff" d="M8.900 14.400c.700-1.100 1.800-1.700 3.100-1.700s2.400.600 3.100 1.700c-.800.900-1.900 1.400-3.100 1.400s-2.300-.500-3.100-1.400z"/></svg><span>你在 Google 地圖中的資料</span></div>
<div class="row t" style="top:665px"><span>開始導覽</span></div>
<div class="row t sel" style="top:701px"><svg style="left:49px;top:10.5px" width="15" height="15" viewBox="0 0 24 24"><path fill="#4285f4" d="M12.870 15.070l-2.540-2.510.030-.030c1.740-1.940 2.980-4.170 3.710-6.530H17V4h-7V2H8v2H1v1.990h11.170C11.500 7.920 10.440 9.750 9 11.350 8.070 10.320 7.300 9.190 6.690 8h-2c.730 1.630 1.730 3.170 2.980 4.560l-5.090 5.020L4 19l5-5 3.110 3.110.760-2.040zM18.500 10h-2L12 22h2l1.120-3h4.750L21 22h2l-4.500-12zm-2.620 7l1.620-4.330L19.120 17h-3.240z"/></svg><span>語言</span></div>
<div class="row t" style="top:737px"><span>提示和祕訣</span></div>
<div class="row t" style="top:773px"><span>取得說明</span></div>
<div class="row t" style="top:809px"><span>消費者資訊</span></div>
</div>
<svg class="abs" style="left:0;top:0;pointer-events:none" width="1348" height="911" viewBox="0 0 1348 911">
<ellipse cx="24.600" cy="32.500" rx="20.800" ry="21" fill="none" stroke="#f01c24" stroke-width="1.900"/>
<ellipse cx="50" cy="791.500" rx="42.400" ry="16.600" fill="none" stroke="#f01c24" stroke-width="1.900"/>
<rect x="314.800" y="568.500" width="155.700" height="20.600" rx="10.300" ry="10.300" fill="none" stroke="#e8202a" stroke-width="1.900"/>
</svg>
<div class="badge" style="left:50px;top:13px">1</div>
<div class="badge" style="left:96px;top:768px">2</div>
<div class="badge" style="left:476px;top:557px">3</div>

</div>
</body>
</html>
